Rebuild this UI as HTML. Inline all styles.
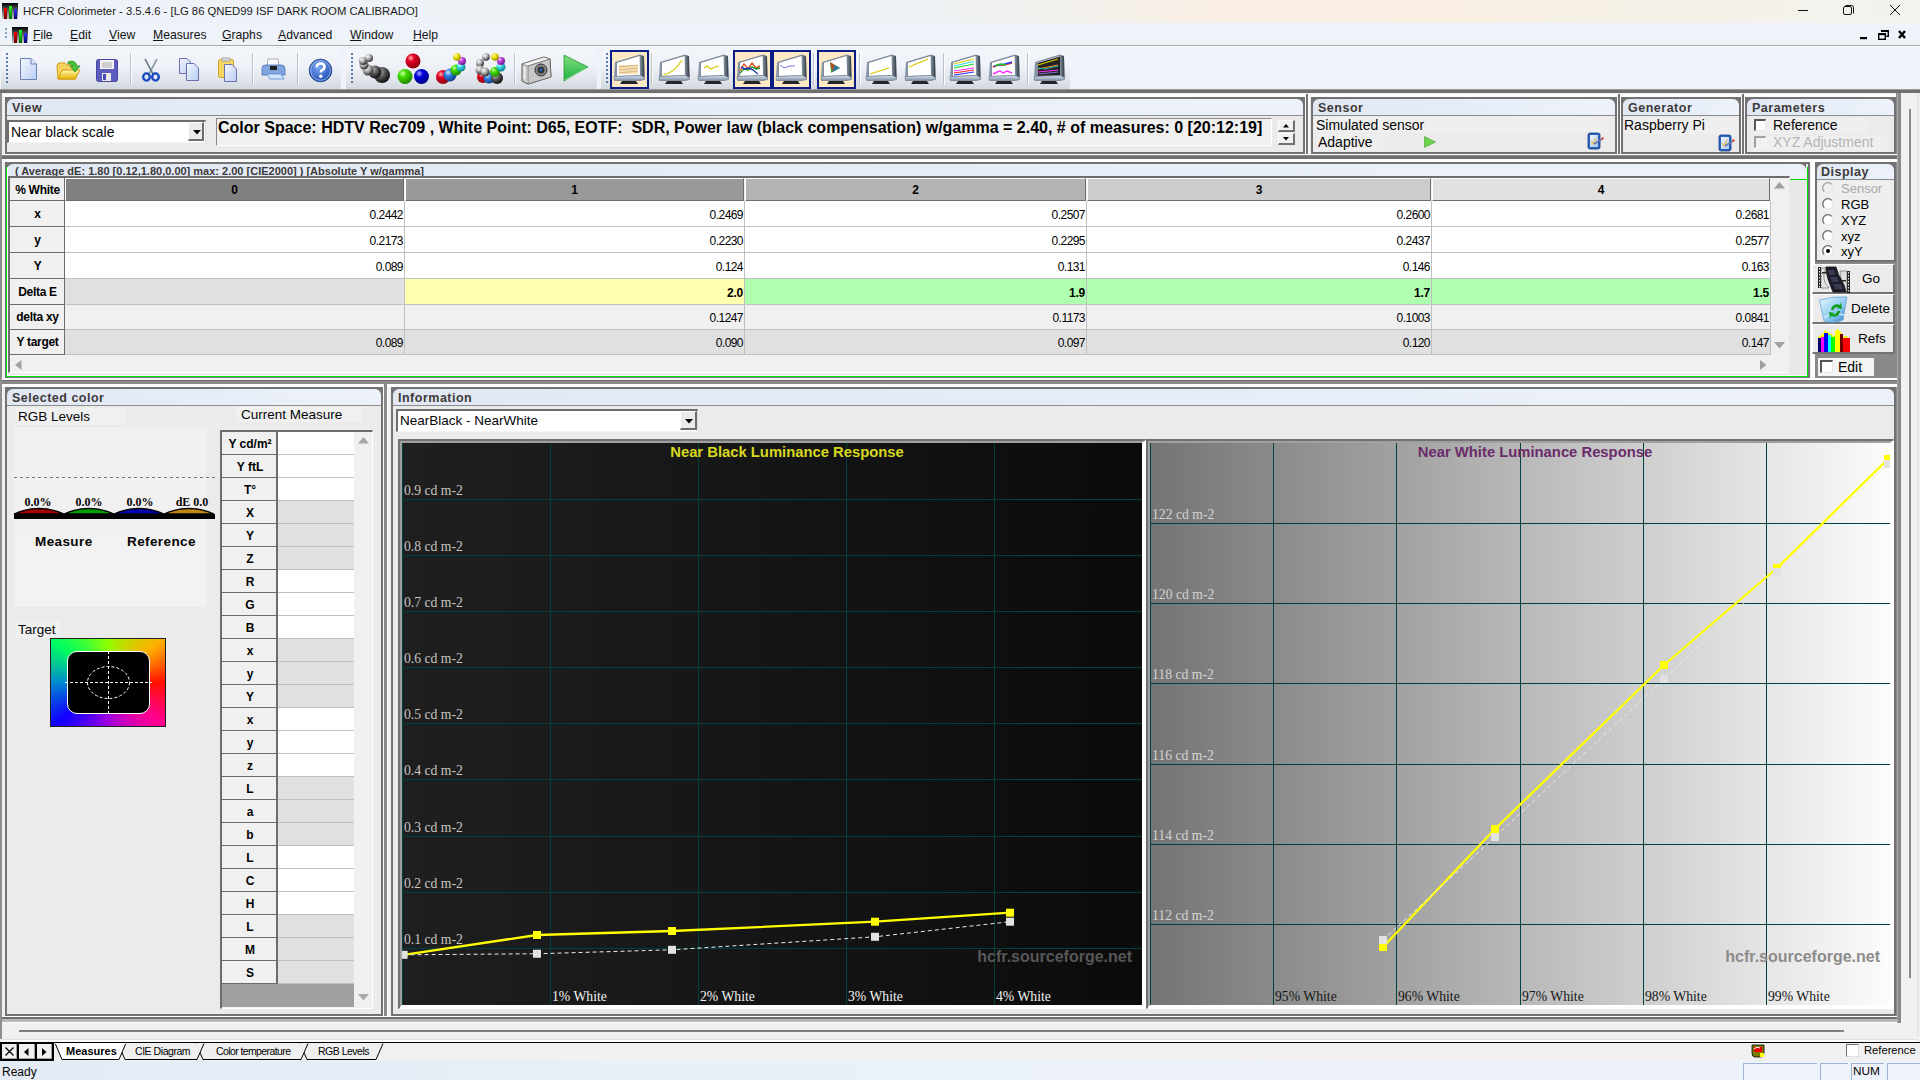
<!DOCTYPE html><html><head><meta charset="utf-8"><style>
*{margin:0;padding:0;box-sizing:border-box}
html,body{width:1920px;height:1080px;overflow:hidden;background:#f0f0f0;font-family:"Liberation Sans",sans-serif;font-size:12px;color:#000}
.p{position:absolute}
.t{position:absolute;white-space:nowrap;line-height:1}
.serif{font-family:"Liberation Serif",serif}
.b{font-weight:bold}
.pnl{position:absolute;border:2px solid #717171;border-radius:0;background:#ebebeb}
.ph{position:absolute;left:0;top:0;right:0;height:17px;background:linear-gradient(90deg,#e1e8f4,#ecf1f9);border-bottom:1px solid #8a8a8a;border-radius:6px 6px 0 0}
.pt{position:absolute;left:6px;top:3px;font-weight:bold;font-size:12.5px;color:#3b3838;white-space:nowrap;line-height:1}
svg{position:absolute;overflow:visible}
</style></head><body>
<div class="p " style="left:0px;top:0px;width:1920px;height:23px;background:linear-gradient(90deg,#eef2f8 0%,#edf2f7 45%,#f1f1ee 54%,#f9eee4 64%,#f9efe3 76%,#f4f1e8 88%,#f2f2ee 100%)"></div>
<svg style="left:2px;top:3px" width="16" height="16" viewBox="0 0 16 16">
<defs><linearGradient id="ig2" x1="0" y1="0" x2="0" y2="1"><stop offset="0" stop-color="#000"/><stop offset="1" stop-color="#000" stop-opacity="0.15"/></linearGradient>
<linearGradient id="rg2" x1="0" y1="0" x2="0" y2="1"><stop offset="0" stop-color="#f00"/><stop offset="1" stop-color="#600"/></linearGradient>
<linearGradient id="gg2" x1="0" y1="0" x2="0" y2="1"><stop offset="0" stop-color="#2f2"/><stop offset="1" stop-color="#060"/></linearGradient>
<linearGradient id="bg2" x1="0" y1="0" x2="0" y2="1"><stop offset="0" stop-color="#33f"/><stop offset="1" stop-color="#006"/></linearGradient></defs>
<rect x="0" y="0" width="16" height="16" fill="url(#ig2)"/>
<rect x="2" y="5" width="3" height="11" fill="url(#rg2)"/><rect x="7" y="3" width="3" height="13" fill="url(#gg2)"/><rect x="12" y="6" width="3" height="10" fill="url(#bg2)"/></svg>
<div class="t " style="left:23px;top:6px;font-size:11.3px;color:#1b1b1b">HCFR Colorimeter - 3.5.4.6 - [LG 86 QNED99 ISF DARK ROOM CALIBRADO]</div>
<svg style="left:1798px;top:4px" width="120" height="14" viewBox="0 0 120 14">
<line x1="0" y1="6.5" x2="10" y2="6.5" stroke="#111" stroke-width="1"/>
<rect x="45.5" y="2.5" width="8" height="8" rx="1.5" fill="none" stroke="#111" stroke-width="1"/>
<path d="M47.5 1.5 h6 a2 2 0 0 1 2 2 v6" fill="none" stroke="#111" stroke-width="1"/>
<line x1="92" y1="1" x2="102" y2="11" stroke="#111" stroke-width="1"/><line x1="102" y1="1" x2="92" y2="11" stroke="#111" stroke-width="1"/>
</svg>
<div class="p " style="left:0px;top:23px;width:1920px;height:22px;background:#eef2f9"></div>
<div class="p " style="left:0px;top:45px;width:1920px;height:1px;background:#a5a8ad"></div>
<div class="p " style="left:0px;top:46px;width:1920px;height:1px;background:#fbfcfe"></div>
<div class="p " style="left:5px;top:28px;width:2px;height:2px;background:#8aa0c0"></div>
<div class="p " style="left:5px;top:32px;width:2px;height:2px;background:#8aa0c0"></div>
<div class="p " style="left:5px;top:36px;width:2px;height:2px;background:#8aa0c0"></div>
<svg style="left:12px;top:27px" width="16" height="16" viewBox="0 0 16 16">
<defs><linearGradient id="ig12" x1="0" y1="0" x2="0" y2="1"><stop offset="0" stop-color="#000"/><stop offset="1" stop-color="#000" stop-opacity="0.15"/></linearGradient>
<linearGradient id="rg12" x1="0" y1="0" x2="0" y2="1"><stop offset="0" stop-color="#f00"/><stop offset="1" stop-color="#600"/></linearGradient>
<linearGradient id="gg12" x1="0" y1="0" x2="0" y2="1"><stop offset="0" stop-color="#2f2"/><stop offset="1" stop-color="#060"/></linearGradient>
<linearGradient id="bg12" x1="0" y1="0" x2="0" y2="1"><stop offset="0" stop-color="#33f"/><stop offset="1" stop-color="#006"/></linearGradient></defs>
<rect x="0" y="0" width="16" height="16" fill="url(#ig12)"/>
<rect x="2" y="5" width="3" height="11" fill="url(#rg12)"/><rect x="7" y="3" width="3" height="13" fill="url(#gg12)"/><rect x="12" y="6" width="3" height="10" fill="url(#bg12)"/></svg>
<div class="t " style="left:33px;top:29px;font-size:12.2px;color:#141414"><u>F</u>ile</div>
<div class="t " style="left:70px;top:29px;font-size:12.2px;color:#141414"><u>E</u>dit</div>
<div class="t " style="left:109px;top:29px;font-size:12.2px;color:#141414"><u>V</u>iew</div>
<div class="t " style="left:153px;top:29px;font-size:12.2px;color:#141414"><u>M</u>easures</div>
<div class="t " style="left:222px;top:29px;font-size:12.2px;color:#141414"><u>G</u>raphs</div>
<div class="t " style="left:278px;top:29px;font-size:12.2px;color:#141414"><u>A</u>dvanced</div>
<div class="t " style="left:350px;top:29px;font-size:12.2px;color:#141414"><u>W</u>indow</div>
<div class="t " style="left:413px;top:29px;font-size:12.2px;color:#141414"><u>H</u>elp</div>
<svg style="left:1858px;top:28px" width="52" height="14" viewBox="0 0 52 14">
<rect x="2" y="9" width="7" height="2.2" fill="#000"/>
<rect x="20.7" y="5.7" width="6.6" height="5.6" fill="none" stroke="#000" stroke-width="1.4"/><rect x="20" y="5" width="8" height="2.2" fill="#000"/>
<path d="M23.7 4 v-1.3 h6.6 v5.6 h-2" fill="none" stroke="#000" stroke-width="1.4"/><rect x="23" y="2" width="8" height="2" fill="#000"/>
<path d="M41 3 L47 10 M47 3 L41 10" stroke="#000" stroke-width="2.4"/>
</svg>
<div class="p " style="left:0px;top:47px;width:1920px;height:43px;background:#eef2f9"></div>
<div class="p " style="left:1px;top:49px;width:340px;height:40px;background:linear-gradient(180deg,#f2f5fa 0%,#eef1f7 45%,#dfe3ea 80%,#d3d8e0 100%);border-radius:4px 4px 0 0"></div>
<div class="p " style="left:6px;top:53px;width:2px;height:2px;background:#5a7aa8"></div>
<div class="p " style="left:6px;top:57px;width:2px;height:2px;background:#5a7aa8"></div>
<div class="p " style="left:6px;top:61px;width:2px;height:2px;background:#5a7aa8"></div>
<div class="p " style="left:6px;top:65px;width:2px;height:2px;background:#5a7aa8"></div>
<div class="p " style="left:6px;top:69px;width:2px;height:2px;background:#5a7aa8"></div>
<div class="p " style="left:6px;top:73px;width:2px;height:2px;background:#5a7aa8"></div>
<div class="p " style="left:6px;top:77px;width:2px;height:2px;background:#5a7aa8"></div>
<div class="p " style="left:6px;top:81px;width:2px;height:2px;background:#5a7aa8"></div>
<div class="p " style="left:346px;top:49px;width:251px;height:40px;background:linear-gradient(180deg,#f2f5fa 0%,#eef1f7 45%,#dfe3ea 80%,#d3d8e0 100%);border-radius:4px 4px 0 0"></div>
<div class="p " style="left:351px;top:53px;width:2px;height:2px;background:#5a7aa8"></div>
<div class="p " style="left:351px;top:57px;width:2px;height:2px;background:#5a7aa8"></div>
<div class="p " style="left:351px;top:61px;width:2px;height:2px;background:#5a7aa8"></div>
<div class="p " style="left:351px;top:65px;width:2px;height:2px;background:#5a7aa8"></div>
<div class="p " style="left:351px;top:69px;width:2px;height:2px;background:#5a7aa8"></div>
<div class="p " style="left:351px;top:73px;width:2px;height:2px;background:#5a7aa8"></div>
<div class="p " style="left:351px;top:77px;width:2px;height:2px;background:#5a7aa8"></div>
<div class="p " style="left:351px;top:81px;width:2px;height:2px;background:#5a7aa8"></div>
<div class="p " style="left:601px;top:49px;width:469px;height:40px;background:linear-gradient(180deg,#f2f5fa 0%,#eef1f7 45%,#dfe3ea 80%,#d3d8e0 100%);border-radius:4px 4px 0 0"></div>
<div class="p " style="left:606px;top:53px;width:2px;height:2px;background:#5a7aa8"></div>
<div class="p " style="left:606px;top:57px;width:2px;height:2px;background:#5a7aa8"></div>
<div class="p " style="left:606px;top:61px;width:2px;height:2px;background:#5a7aa8"></div>
<div class="p " style="left:606px;top:65px;width:2px;height:2px;background:#5a7aa8"></div>
<div class="p " style="left:606px;top:69px;width:2px;height:2px;background:#5a7aa8"></div>
<div class="p " style="left:606px;top:73px;width:2px;height:2px;background:#5a7aa8"></div>
<div class="p " style="left:606px;top:77px;width:2px;height:2px;background:#5a7aa8"></div>
<div class="p " style="left:606px;top:81px;width:2px;height:2px;background:#5a7aa8"></div>
<div class="p " style="left:130px;top:53px;width:1px;height:32px;background:#b9c0cc"></div>
<div class="p " style="left:131px;top:53px;width:1px;height:32px;background:#fdfdfe"></div>
<div class="p " style="left:252px;top:53px;width:1px;height:32px;background:#b9c0cc"></div>
<div class="p " style="left:253px;top:53px;width:1px;height:32px;background:#fdfdfe"></div>
<div class="p " style="left:297px;top:53px;width:1px;height:32px;background:#b9c0cc"></div>
<div class="p " style="left:298px;top:53px;width:1px;height:32px;background:#fdfdfe"></div>
<div class="p " style="left:514px;top:53px;width:1px;height:32px;background:#b9c0cc"></div>
<div class="p " style="left:515px;top:53px;width:1px;height:32px;background:#fdfdfe"></div>
<div class="p " style="left:651px;top:53px;width:1px;height:32px;background:#b9c0cc"></div>
<div class="p " style="left:652px;top:53px;width:1px;height:32px;background:#fdfdfe"></div>
<div class="p " style="left:813px;top:53px;width:1px;height:32px;background:#b9c0cc"></div>
<div class="p " style="left:814px;top:53px;width:1px;height:32px;background:#fdfdfe"></div>
<div class="p " style="left:859px;top:53px;width:1px;height:32px;background:#b9c0cc"></div>
<div class="p " style="left:860px;top:53px;width:1px;height:32px;background:#fdfdfe"></div>
<div class="p " style="left:943px;top:53px;width:1px;height:32px;background:#b9c0cc"></div>
<div class="p " style="left:944px;top:53px;width:1px;height:32px;background:#fdfdfe"></div>
<div class="p " style="left:1027px;top:53px;width:1px;height:32px;background:#b9c0cc"></div>
<div class="p " style="left:1028px;top:53px;width:1px;height:32px;background:#fdfdfe"></div>
<svg style="left:0;top:0" width="0" height="0"><defs>
<linearGradient id="paper" x1="0" y1="0" x2="1" y2="1"><stop offset="0" stop-color="#f4f7ff"/><stop offset="1" stop-color="#b9cdf3"/></linearGradient>
<linearGradient id="fold" x1="0" y1="0" x2="0" y2="1"><stop offset="0" stop-color="#fff6b0"/><stop offset="1" stop-color="#e8b400"/></linearGradient>
<radialGradient id="ballgray" cx="0.35" cy="0.3" r="0.7"><stop offset="0" stop-color="#fff"/><stop offset="0.5" stop-color="#aaa"/><stop offset="1" stop-color="#333"/></radialGradient>
<radialGradient id="balldark" cx="0.35" cy="0.3" r="0.7"><stop offset="0" stop-color="#bbb"/><stop offset="0.5" stop-color="#555"/><stop offset="1" stop-color="#111"/></radialGradient>
<radialGradient id="ballr" cx="0.35" cy="0.3" r="0.7"><stop offset="0" stop-color="#ffb0b0"/><stop offset="0.35" stop-color="#e00020"/><stop offset="1" stop-color="#900010"/></radialGradient>
<radialGradient id="ballg" cx="0.35" cy="0.3" r="0.7"><stop offset="0" stop-color="#d0ffb0"/><stop offset="0.35" stop-color="#44dd00"/><stop offset="1" stop-color="#208800"/></radialGradient>
<radialGradient id="ballb" cx="0.35" cy="0.3" r="0.7"><stop offset="0" stop-color="#b0b0ff"/><stop offset="0.35" stop-color="#0000dd"/><stop offset="1" stop-color="#000088"/></radialGradient>
<radialGradient id="bally" cx="0.35" cy="0.3" r="0.7"><stop offset="0" stop-color="#ffffd0"/><stop offset="0.4" stop-color="#f0e000"/><stop offset="1" stop-color="#a09000"/></radialGradient>
<radialGradient id="ballm" cx="0.35" cy="0.3" r="0.7"><stop offset="0" stop-color="#ffd0ff"/><stop offset="0.4" stop-color="#c040e0"/><stop offset="1" stop-color="#702090"/></radialGradient>
<radialGradient id="ballc" cx="0.35" cy="0.3" r="0.7"><stop offset="0" stop-color="#e0ffff"/><stop offset="0.4" stop-color="#30d8e0"/><stop offset="1" stop-color="#108090"/></radialGradient>
<radialGradient id="ballbl" cx="0.35" cy="0.3" r="0.7"><stop offset="0" stop-color="#d0e8ff"/><stop offset="0.4" stop-color="#3080e0"/><stop offset="1" stop-color="#104090"/></radialGradient>
<linearGradient id="monbase" x1="0" y1="0" x2="0" y2="1"><stop offset="0" stop-color="#dfe6f0"/><stop offset="1" stop-color="#7f90a8"/></linearGradient>
<linearGradient id="monside" x1="0" y1="0" x2="1" y2="0"><stop offset="0" stop-color="#8090a0"/><stop offset="1" stop-color="#303840"/></linearGradient>
<linearGradient id="playg" x1="0" y1="0" x2="0" y2="1"><stop offset="0" stop-color="#80e080"/><stop offset="1" stop-color="#20b040"/></linearGradient>
<radialGradient id="helpg" cx="0.4" cy="0.35" r="0.7"><stop offset="0" stop-color="#7aa8f0"/><stop offset="1" stop-color="#1a48b0"/></radialGradient>
</defs></svg>
<svg style="left:19px;top:57px" width="19" height="24" viewBox="0 0 19 24"><path d="M1.5 1.5 H12 L17.5 7 V22.5 H1.5 Z" fill="url(#paper)" stroke="#6d80b5" stroke-width="1"/><path d="M12 1.5 V7 H17.5" fill="#dde6f8" stroke="#6d80b5" stroke-width="1"/></svg>
<svg style="left:55px;top:58px" width="26" height="24" viewBox="0 0 26 24"><path d="M2 8 Q2 5 5 5 H10 L12 7 H19 Q21 7 21 9 V21 H3 Z" fill="#f5d560" stroke="#d49a10" stroke-width="1"/><path d="M3 21 L7 12 H25 L20 21 Z" fill="url(#fold)" stroke="#d49a10" stroke-width="1"/><path d="M13 4 Q20 1 22 8 L25 8 L20 14 L15 8 L18 8 Q17 5 13 6 Z" fill="#4cc43c" stroke="#2a8a20" stroke-width="0.8"/></svg>
<svg style="left:96px;top:59px" width="22" height="23" viewBox="0 0 22 23"><rect x="0.5" y="0.5" width="21" height="22" rx="2" fill="#5b5bc0" stroke="#4848a0"/><rect x="4" y="1" width="14" height="9" fill="#f4f4f4"/><line x1="6" y1="4" x2="16" y2="4" stroke="#aaa"/><line x1="6" y1="6" x2="16" y2="6" stroke="#aaa"/><line x1="6" y1="8" x2="16" y2="8" stroke="#aaa"/><rect x="6" y="14" width="9" height="8" fill="#e8e8e8"/><rect x="7" y="15" width="3" height="6" fill="#4a4ab0"/></svg>
<svg style="left:142px;top:58px" width="18" height="24" viewBox="0 0 18 24"><path d="M3 1 L11 16 M15 1 L7 16" stroke="#8a9aaa" stroke-width="1.6" fill="none"/><path d="M3 1 L11 16" stroke="#334" stroke-width="0.5"/><ellipse cx="4.5" cy="19" rx="3.3" ry="3.6" fill="none" stroke="#1848c0" stroke-width="2.4"/><ellipse cx="13.5" cy="19" rx="3.3" ry="3.6" fill="none" stroke="#1848c0" stroke-width="2.4"/></svg>
<svg style="left:178px;top:57px" width="23" height="25" viewBox="0 0 23 25"><path d="M1.5 1.5 H9 L12.5 5 V16.5 H1.5 Z" fill="url(#paper)" stroke="#6d70b0"/><path d="M8.5 6.5 H16 L20.5 11 V23.5 H8.5 Z" fill="url(#paper)" stroke="#6d70b0"/></svg>
<svg style="left:217px;top:57px" width="23" height="26" viewBox="0 0 23 26"><rect x="1.5" y="2.5" width="15" height="18" rx="2" fill="#f6d665" stroke="#d0a020"/><rect x="5" y="1" width="8" height="3" fill="#ddd" stroke="#999" stroke-width="0.8"/><path d="M7.5 7.5 H15 L19.5 12 V24.5 H7.5 Z" fill="url(#paper)" stroke="#6d70b0"/></svg>
<svg style="left:261px;top:58px" width="25" height="24" viewBox="0 0 25 24"><path d="M7 1 H17 L18 8 H6 Z" fill="#fff" stroke="#999" stroke-width="0.8"/><path d="M1 10 Q1 7 5 7 H20 Q24 7 24 11 V17 H1 Z" fill="#7fa6df" stroke="#4a70b0" stroke-width="0.8"/><rect x="9" y="8" width="7" height="4" fill="#222"/><path d="M6 16 H20 L23 21 H9 Z" fill="#cfe4fa" stroke="#5a8ad0" stroke-width="0.8"/></svg>
<svg style="left:308px;top:58px" width="25" height="25" viewBox="0 0 25 25"><circle cx="12.5" cy="12.5" r="11.3" fill="url(#helpg)" stroke="#2c4f90" stroke-width="1"/><circle cx="12.5" cy="12.5" r="9.8" fill="none" stroke="#a8c4f0" stroke-width="0.8"/><path d="M8.7 9.2 Q8.7 5.5 12.7 5.5 Q16.5 5.5 16.5 8.8 Q16.5 11 14 12.2 Q12.8 12.9 12.8 14.5" fill="none" stroke="#fff" stroke-width="2.6"/><circle cx="12.8" cy="18.2" r="1.7" fill="#fff"/></svg>
<svg style="left:358px;top:53px" width="32" height="32" viewBox="0 0 32 32"><circle cx="24" cy="22" r="8" fill="url(#balldark)"/><circle cx="17" cy="19" r="6.5" fill="url(#balldark)"/><circle cx="10" cy="17" r="5.5" fill="url(#ballgray)"/><circle cx="6" cy="12" r="4.5" fill="url(#ballgray)"/><circle cx="5" cy="8" r="4" fill="url(#ballgray)"/><circle cx="11" cy="5" r="4" fill="url(#ballgray)"/></svg>
<svg style="left:397px;top:53px" width="32" height="32" viewBox="0 0 32 32"><circle cx="16" cy="8" r="7.5" fill="url(#ballr)"/><circle cx="8" cy="23.5" r="7.5" fill="url(#ballg)"/><circle cx="24.5" cy="23.5" r="7.5" fill="url(#ballb)"/></svg>
<svg style="left:436px;top:53px" width="32" height="32" viewBox="0 0 32 32"><circle cx="7" cy="24" r="7" fill="url(#ballr)"/><circle cx="14" cy="22" r="6.5" fill="url(#ballbl)"/><circle cx="20" cy="17" r="5.5" fill="url(#ballg)"/><circle cx="25" cy="14" r="4.5" fill="url(#ballc)"/><circle cx="26" cy="8" r="4" fill="url(#ballm)"/><circle cx="21" cy="4" r="3.8" fill="url(#bally)"/></svg>
<svg style="left:475px;top:53px" width="32" height="32" viewBox="0 0 32 32"><circle cx="8" cy="24" r="6" fill="url(#ballr)"/><circle cx="14" cy="25" r="5.5" fill="url(#ballbl)"/><circle cx="22" cy="25" r="6" fill="url(#balldark)"/><circle cx="20" cy="19" r="5" fill="url(#ballg)"/><circle cx="26" cy="14" r="4.5" fill="url(#ballc)"/><circle cx="26" cy="8" r="4" fill="url(#ballm)"/><circle cx="20" cy="4" r="3.8" fill="url(#bally)"/><circle cx="11" cy="4" r="3.8" fill="url(#ballgray)"/><circle cx="5" cy="10" r="4" fill="url(#ballgray)"/><circle cx="5" cy="17" r="4.5" fill="url(#ballgray)"/><circle cx="10" cy="19" r="4.5" fill="url(#ballgray)"/></svg>
<svg style="left:520px;top:53px" width="32" height="32" viewBox="0 0 32 32"><path d="M2 11 L24 4 L30 6 L31 24 L8 31 L2 28 Z" fill="#dcdcdc" stroke="#555" stroke-width="1"/><path d="M2 11 L24 4 L30 6 L8 13 Z" fill="#f4f4f4" stroke="#666" stroke-width="0.6"/><path d="M8 13 L30 6 L31 24 L8 31 Z" fill="#c8c8c8" stroke="#555" stroke-width="0.6"/><circle cx="21" cy="17" r="6" fill="#888" stroke="#333"/><circle cx="21" cy="17" r="3.5" fill="#333"/><circle cx="21" cy="17" r="1.3" fill="#1d6cf0"/><rect x="3" y="13" width="3" height="14" fill="#eee" stroke="#999" stroke-width="0.5"/></svg>
<svg style="left:563px;top:54px" width="26" height="28" viewBox="0 0 26 28"><path d="M1 1 L25 13 L1 27 Z" fill="url(#playg)" stroke="#2a9a3a" stroke-width="0.8"/><path d="M2 26 L24 14" stroke="#c0f0c0" stroke-width="0.8"/></svg>
<div class="p " style="left:610px;top:50px;width:39px;height:39px;background:#fde9c3;border:2px solid #0b1c84"></div>
<div class="p " style="left:733px;top:50px;width:39px;height:39px;background:#fde9c3;border:2px solid #0b1c84"></div>
<div class="p " style="left:772px;top:50px;width:39px;height:39px;background:#fde9c3;border:2px solid #0b1c84"></div>
<div class="p " style="left:817px;top:50px;width:39px;height:39px;background:#fde9c3;border:2px solid #0b1c84"></div>
<div class="p " style="left:772px;top:50px;width:1px;height:39px;background:#0b1c84"></div>
<svg style="left:613px;top:53px" width="32" height="32" viewBox="0 0 32 32"><path d="M2 9 L27 1.5 L31 3 L31.5 25 L27 26 L3 27 L1 25 Z" fill="#8494a8"/>
<path d="M3.5 9.5 L27 2.5 L27.5 22.5 L3.5 23.5 Z" fill="#fff" stroke="#5a6878" stroke-width="0.6"/>
<path d="M27 2 L31 3.2 L31.5 24.5 L27.5 23 Z" fill="url(#monside)"/>
<path d="M1 23.5 L27.5 22.5 L31.5 24.5 L31.5 26.5 L27.5 27.5 L1.5 27.5 L1 25.5 Z" fill="url(#monbase)" stroke="#59667a" stroke-width="0.5"/>
<path d="M9 28 H23 L25 31 H7 Z" fill="#22262c"/>
<g fill="#f6dfb0"><rect x="6" y="12" width="19" height="9"/></g><g stroke="#c9a070" stroke-width="0.7"><line x1="6" y1="14" x2="25" y2="12"/><line x1="6" y1="17" x2="25" y2="15"/><line x1="6" y1="20" x2="25" y2="18"/></g></svg>
<svg style="left:658px;top:53px" width="32" height="32" viewBox="0 0 32 32"><path d="M2 9 L27 1.5 L31 3 L31.5 25 L27 26 L3 27 L1 25 Z" fill="#8494a8"/>
<path d="M3.5 9.5 L27 2.5 L27.5 22.5 L3.5 23.5 Z" fill="#fff" stroke="#5a6878" stroke-width="0.6"/>
<path d="M27 2 L31 3.2 L31.5 24.5 L27.5 23 Z" fill="url(#monside)"/>
<path d="M1 23.5 L27.5 22.5 L31.5 24.5 L31.5 26.5 L27.5 27.5 L1.5 27.5 L1 25.5 Z" fill="url(#monbase)" stroke="#59667a" stroke-width="0.5"/>
<path d="M9 28 H23 L25 31 H7 Z" fill="#22262c"/>
<path d="M5 22 Q16 20 24 7" fill="none" stroke="#d8c800" stroke-width="1.2"/></svg>
<svg style="left:697px;top:53px" width="32" height="32" viewBox="0 0 32 32"><path d="M2 9 L27 1.5 L31 3 L31.5 25 L27 26 L3 27 L1 25 Z" fill="#8494a8"/>
<path d="M3.5 9.5 L27 2.5 L27.5 22.5 L3.5 23.5 Z" fill="#fff" stroke="#5a6878" stroke-width="0.6"/>
<path d="M27 2 L31 3.2 L31.5 24.5 L27.5 23 Z" fill="url(#monside)"/>
<path d="M1 23.5 L27.5 22.5 L31.5 24.5 L31.5 26.5 L27.5 27.5 L1.5 27.5 L1 25.5 Z" fill="url(#monbase)" stroke="#59667a" stroke-width="0.5"/>
<path d="M9 28 H23 L25 31 H7 Z" fill="#22262c"/>
<path d="M7 15 L10 13 L14 16 L18 14 L22 13" fill="none" stroke="#d8c800" stroke-width="1.2"/></svg>
<svg style="left:736px;top:53px" width="32" height="32" viewBox="0 0 32 32"><path d="M2 9 L27 1.5 L31 3 L31.5 25 L27 26 L3 27 L1 25 Z" fill="#8494a8"/>
<path d="M3.5 9.5 L27 2.5 L27.5 22.5 L3.5 23.5 Z" fill="#fff" stroke="#5a6878" stroke-width="0.6"/>
<path d="M27 2 L31 3.2 L31.5 24.5 L27.5 23 Z" fill="url(#monside)"/>
<path d="M1 23.5 L27.5 22.5 L31.5 24.5 L31.5 26.5 L27.5 27.5 L1.5 27.5 L1 25.5 Z" fill="url(#monbase)" stroke="#59667a" stroke-width="0.5"/>
<path d="M9 28 H23 L25 31 H7 Z" fill="#22262c"/>
<path d="M4 18 L8 11 L12 16 L16 10 L20 15 L24 13" fill="none" stroke="#e05020" stroke-width="1.4"/><path d="M4 20 L8 16 L12 17 L16 14 L20 16 L24 15" fill="none" stroke="#209020" stroke-width="1.4"/><path d="M5 14 L9 16 L13 15 L17 17 L22 21" fill="none" stroke="#1838b0" stroke-width="1.4"/></svg>
<svg style="left:775px;top:53px" width="32" height="32" viewBox="0 0 32 32"><path d="M2 9 L27 1.5 L31 3 L31.5 25 L27 26 L3 27 L1 25 Z" fill="#8494a8"/>
<path d="M3.5 9.5 L27 2.5 L27.5 22.5 L3.5 23.5 Z" fill="#fff" stroke="#5a6878" stroke-width="0.6"/>
<path d="M27 2 L31 3.2 L31.5 24.5 L27.5 23 Z" fill="url(#monside)"/>
<path d="M1 23.5 L27.5 22.5 L31.5 24.5 L31.5 26.5 L27.5 27.5 L1.5 27.5 L1 25.5 Z" fill="url(#monbase)" stroke="#59667a" stroke-width="0.5"/>
<path d="M9 28 H23 L25 31 H7 Z" fill="#22262c"/>
<path d="M5 12 L9 15 L15 13 L20 13" fill="none" stroke="#7a70e0" stroke-width="1"/></svg>
<svg style="left:820px;top:53px" width="32" height="32" viewBox="0 0 32 32"><path d="M2 9 L27 1.5 L31 3 L31.5 25 L27 26 L3 27 L1 25 Z" fill="#8494a8"/>
<path d="M3.5 9.5 L27 2.5 L27.5 22.5 L3.5 23.5 Z" fill="#fff" stroke="#5a6878" stroke-width="0.6"/>
<path d="M27 2 L31 3.2 L31.5 24.5 L27.5 23 Z" fill="url(#monside)"/>
<path d="M1 23.5 L27.5 22.5 L31.5 24.5 L31.5 26.5 L27.5 27.5 L1.5 27.5 L1 25.5 Z" fill="url(#monbase)" stroke="#59667a" stroke-width="0.5"/>
<path d="M9 28 H23 L25 31 H7 Z" fill="#22262c"/>
<path d="M10 9 L20 15 L11 20 Z" fill="#40c040"/><path d="M10 9 L15 12 L12 19 Z" fill="#e02020" opacity="0.7"/><path d="M15 12 L20 15 L12 19 Z" fill="#2040e0" opacity="0.6"/></svg>
<svg style="left:865px;top:53px" width="32" height="32" viewBox="0 0 32 32"><path d="M2 9 L27 1.5 L31 3 L31.5 25 L27 26 L3 27 L1 25 Z" fill="#8494a8"/>
<path d="M3.5 9.5 L27 2.5 L27.5 22.5 L3.5 23.5 Z" fill="#fff" stroke="#5a6878" stroke-width="0.6"/>
<path d="M27 2 L31 3.2 L31.5 24.5 L27.5 23 Z" fill="url(#monside)"/>
<path d="M1 23.5 L27.5 22.5 L31.5 24.5 L31.5 26.5 L27.5 27.5 L1.5 27.5 L1 25.5 Z" fill="url(#monbase)" stroke="#59667a" stroke-width="0.5"/>
<path d="M9 28 H23 L25 31 H7 Z" fill="#22262c"/>
<path d="M5 21 L24 15" fill="none" stroke="#d8c800" stroke-width="1.2"/></svg>
<svg style="left:904px;top:53px" width="32" height="32" viewBox="0 0 32 32"><path d="M2 9 L27 1.5 L31 3 L31.5 25 L27 26 L3 27 L1 25 Z" fill="#8494a8"/>
<path d="M3.5 9.5 L27 2.5 L27.5 22.5 L3.5 23.5 Z" fill="#fff" stroke="#5a6878" stroke-width="0.6"/>
<path d="M27 2 L31 3.2 L31.5 24.5 L27.5 23 Z" fill="url(#monside)"/>
<path d="M1 23.5 L27.5 22.5 L31.5 24.5 L31.5 26.5 L27.5 27.5 L1.5 27.5 L1 25.5 Z" fill="url(#monbase)" stroke="#59667a" stroke-width="0.5"/>
<path d="M9 28 H23 L25 31 H7 Z" fill="#22262c"/>
<path d="M5 14 L24 6" fill="none" stroke="#d8c800" stroke-width="1.2"/></svg>
<svg style="left:949px;top:53px" width="32" height="32" viewBox="0 0 32 32"><path d="M2 9 L27 1.5 L31 3 L31.5 25 L27 26 L3 27 L1 25 Z" fill="#8494a8"/>
<path d="M3.5 9.5 L27 2.5 L27.5 22.5 L3.5 23.5 Z" fill="#fff" stroke="#5a6878" stroke-width="0.6"/>
<path d="M27 2 L31 3.2 L31.5 24.5 L27.5 23 Z" fill="url(#monside)"/>
<path d="M1 23.5 L27.5 22.5 L31.5 24.5 L31.5 26.5 L27.5 27.5 L1.5 27.5 L1 25.5 Z" fill="url(#monbase)" stroke="#59667a" stroke-width="0.5"/>
<path d="M9 28 H23 L25 31 H7 Z" fill="#22262c"/>
<g fill="none" stroke-width="1.1"><path d="M5 11 L25 6" stroke="#e0c800"/><path d="M5 13 L25 8.5" stroke="#20e0e8"/><path d="M5 15 L25 11" stroke="#20d020"/><path d="M5 18 L25 15" stroke="#ff30ff"/><path d="M5 20 L25 17" stroke="#ff2020"/><path d="M5 22 L25 19" stroke="#2030ff"/></g></svg>
<svg style="left:988px;top:53px" width="32" height="32" viewBox="0 0 32 32"><path d="M2 9 L27 1.5 L31 3 L31.5 25 L27 26 L3 27 L1 25 Z" fill="#8494a8"/>
<path d="M3.5 9.5 L27 2.5 L27.5 22.5 L3.5 23.5 Z" fill="#fff" stroke="#5a6878" stroke-width="0.6"/>
<path d="M27 2 L31 3.2 L31.5 24.5 L27.5 23 Z" fill="url(#monside)"/>
<path d="M1 23.5 L27.5 22.5 L31.5 24.5 L31.5 26.5 L27.5 27.5 L1.5 27.5 L1 25.5 Z" fill="url(#monbase)" stroke="#59667a" stroke-width="0.5"/>
<path d="M9 28 H23 L25 31 H7 Z" fill="#22262c"/>
<g fill="none" stroke-width="1.4"><path d="M5 14 L10 12 L16 12 L24 10" stroke="#ff2020"/><path d="M6 13 L11 12 L17 11 L24 9" stroke="#2040ff"/><path d="M7 13 L12 11 L18 12" stroke="#20c020"/><path d="M5 21 L9 19 L12 18 L15 20 L19 18 L24 20" stroke="#ff30ff"/></g></svg>
<svg style="left:1033px;top:53px" width="32" height="32" viewBox="0 0 32 32"><path d="M2 9 L27 1.5 L31 3 L31.5 25 L27 26 L3 27 L1 25 Z" fill="#8494a8"/>
<path d="M3.5 9.5 L27 2.5 L27.5 22.5 L3.5 23.5 Z" fill="#fff" stroke="#5a6878" stroke-width="0.6"/>
<path d="M27 2 L31 3.2 L31.5 24.5 L27.5 23 Z" fill="url(#monside)"/>
<path d="M1 23.5 L27.5 22.5 L31.5 24.5 L31.5 26.5 L27.5 27.5 L1.5 27.5 L1 25.5 Z" fill="url(#monbase)" stroke="#59667a" stroke-width="0.5"/>
<path d="M9 28 H23 L25 31 H7 Z" fill="#22262c"/>
<path d="M4.5 10 L27 3.5 L27 22 L4.5 23 Z" fill="#222"/><g fill="none" stroke-width="1.1"><path d="M5 12 L25 6" stroke="#e0c800"/><path d="M5 16 L10 15 L15 14 L25 12" stroke="#ff8020"/><path d="M5 15 L12 16 L25 13" stroke="#20c0c0"/><path d="M5 19 L25 17" stroke="#ff30ff"/><path d="M6 21 L25 19" stroke="#8070e0"/></g></svg>
<div class="p " style="left:0px;top:89px;width:1920px;height:1px;background:#9a9a9a"></div>
<div class="p " style="left:0px;top:90px;width:1920px;height:3px;background:#6f6f6f"></div>
<div class="p " style="left:0px;top:93px;width:1920px;height:949px;background:#f0f0f0"></div>
<div class="p " style="left:0px;top:93px;width:2px;height:946px;background:#8f8f8f"></div>
<div class="p " style="left:1909px;top:109px;width:2px;height:869px;background:#8a8a8a"></div>
<div class="p " style="left:1917px;top:93px;width:2px;height:943px;background:#e4e4e4"></div>
<div class="p " style="left:2px;top:94px;width:1895px;height:3px;background:#fdfdfd"></div>
<div class="p " style="left:5px;top:97px;width:1300px;height:57px;background:#ebebeb;border:2px solid #727272"></div>
<div class="p " style="left:7px;top:99px;width:1296px;height:8px;background:#727272"></div>
<div class="p " style="left:7px;top:99px;width:1296px;height:17px;background:linear-gradient(90deg,#e1e8f4,#edf2fa);border-bottom:1px solid #8c8c8c;border-radius:6px 6px 0 0"></div>
<div class="t " style="left:12px;top:102px;font-weight:bold;font-size:12.5px;letter-spacing:0.5px;color:#3d3a3a">View</div>
<div class="p " style="left:1311px;top:97px;width:306px;height:57px;background:#ebebeb;border:2px solid #727272"></div>
<div class="p " style="left:1313px;top:99px;width:302px;height:8px;background:#727272"></div>
<div class="p " style="left:1313px;top:99px;width:302px;height:17px;background:linear-gradient(90deg,#e1e8f4,#edf2fa);border-bottom:1px solid #8c8c8c;border-radius:6px 6px 0 0"></div>
<div class="t " style="left:1318px;top:102px;font-weight:bold;font-size:12.5px;letter-spacing:0.5px;color:#3d3a3a">Sensor</div>
<div class="p " style="left:1621px;top:97px;width:120px;height:57px;background:#ebebeb;border:2px solid #727272"></div>
<div class="p " style="left:1623px;top:99px;width:116px;height:8px;background:#727272"></div>
<div class="p " style="left:1623px;top:99px;width:116px;height:17px;background:linear-gradient(90deg,#e1e8f4,#edf2fa);border-bottom:1px solid #8c8c8c;border-radius:6px 6px 0 0"></div>
<div class="t " style="left:1628px;top:102px;font-weight:bold;font-size:12.5px;letter-spacing:0.5px;color:#3d3a3a">Generator</div>
<div class="p " style="left:1745px;top:97px;width:151px;height:57px;background:#ebebeb;border:2px solid #727272"></div>
<div class="p " style="left:1747px;top:99px;width:147px;height:8px;background:#727272"></div>
<div class="p " style="left:1747px;top:99px;width:147px;height:17px;background:linear-gradient(90deg,#e1e8f4,#edf2fa);border-bottom:1px solid #8c8c8c;border-radius:6px 6px 0 0"></div>
<div class="t " style="left:1752px;top:102px;font-weight:bold;font-size:12.5px;letter-spacing:0.5px;color:#3d3a3a">Parameters</div>
<div class="p " style="left:1305px;top:94px;width:1px;height:61px;background:#fdfdfd"></div>
<div class="p " style="left:1306px;top:94px;width:2px;height:61px;background:#747474"></div>
<div class="p " style="left:1308px;top:94px;width:1px;height:61px;background:#fdfdfd"></div>
<div class="p " style="left:1617px;top:94px;width:1px;height:61px;background:#fdfdfd"></div>
<div class="p " style="left:1618px;top:94px;width:2px;height:61px;background:#747474"></div>
<div class="p " style="left:1620px;top:94px;width:1px;height:61px;background:#fdfdfd"></div>
<div class="p " style="left:1741px;top:94px;width:1px;height:61px;background:#fdfdfd"></div>
<div class="p " style="left:1742px;top:94px;width:2px;height:61px;background:#747474"></div>
<div class="p " style="left:1744px;top:94px;width:1px;height:61px;background:#fdfdfd"></div>
<div class="p " style="left:1896px;top:93px;width:5px;height:930px;background:#8a8a8a"></div>
<div class="p " style="left:1897px;top:93px;width:1px;height:930px;background:#a8a8a8"></div>
<div class="p " style="left:2px;top:154px;width:1895px;height:1px;background:#fdfdfd"></div>
<div class="p " style="left:2px;top:155px;width:1895px;height:4px;background:#6f6f6f"></div>
<div class="p " style="left:2px;top:155px;width:1895px;height:1px;background:#8a8a8a"></div>
<div class="p " style="left:2px;top:159px;width:1895px;height:3px;background:#fdfdfd"></div>
<div class="p " style="left:7px;top:120px;width:199px;height:23px;background:#fff;border-top:2px solid #6d6d6d;border-left:2px solid #6d6d6d;border-bottom:1px solid #f4f4f4;border-right:1px solid #dcdcdc"></div>
<div class="t " style="left:11px;top:125px;font-size:14px;color:#050505">Near black scale</div>
<div class="p " style="left:188px;top:122px;width:16px;height:19px;background:#ebebeb;border-right:2px solid #6d6d6d;border-bottom:2px solid #6d6d6d;border-top:1px solid #fff;border-left:1px solid #fff"></div>
<svg style="left:193px;top:130px" width="8" height="5" viewBox="0 0 8 5"><path d="M0 0 H8 L4 4.5 Z" fill="#000"/></svg>
<div class="p " style="left:216px;top:118px;width:1056px;height:28px;background:#f0f0f0;border-top:1px solid #8a8a8a;border-left:1px solid #8a8a8a;border-bottom:1px solid #fff;border-right:1px solid #fff"></div>
<div class="t " style="left:218px;top:120px;font-weight:bold;font-size:16px;color:#000">Color Space: HDTV Rec709 , White Point: D65, EOTF:&nbsp; SDR, Power law (black compensation) w/gamma = 2.40, # of measures: 0 [20:12:19]</div>
<div class="p " style="left:1278px;top:120px;width:17px;height:12px;background:#f0f0f0;border-right:2px solid #717171;border-bottom:2px solid #717171;border-top:1px solid #fff;border-left:1px solid #fff"></div>
<svg style="left:1283px;top:124px" width="6" height="4" viewBox="0 0 6 4"><path d="M0 3.5 H6 L3 0 Z" fill="#000"/></svg>
<div class="p " style="left:1278px;top:133px;width:17px;height:12px;background:#f0f0f0;border-right:2px solid #717171;border-bottom:2px solid #717171;border-top:1px solid #fff;border-left:1px solid #fff"></div>
<svg style="left:1283px;top:137px" width="6" height="4" viewBox="0 0 6 4"><path d="M0 0 H6 L3 3.5 Z" fill="#000"/></svg>
<div class="p " style="left:1314px;top:117px;width:295px;height:16px;background:#efefef"></div>
<div class="t " style="left:1316px;top:117.5px;font-size:14px;color:#050505">Simulated sensor</div>
<div class="p " style="left:1317px;top:134px;width:68px;height:17px;background:#efefef"></div>
<div class="t " style="left:1318px;top:134.5px;font-size:14px;color:#050505">Adaptive</div>
<svg style="left:1424px;top:136px" width="12" height="12" viewBox="0 0 12 12"><path d="M0.5 0.5 L11.5 6 L0.5 11.5 Z" fill="#6ad34a" stroke="#4a9a3a" stroke-width="0.6"/></svg>
<svg style="left:1587px;top:132px" width="17" height="18" viewBox="0 0 17 18"><defs><linearGradient id="edg" x1="0" y1="0" x2="1" y2="1"><stop offset="0" stop-color="#f4f8ff"/><stop offset="1" stop-color="#a8c4ec"/></linearGradient></defs><path d="M1 3 Q1 1 3 1 H11 Q13 1 13 3 V15 Q13 17 11 17 H3 Q1 17 1 15 Z" fill="#2a62c0" stroke="#183e88" stroke-width="0.8"/><rect x="3" y="3" width="8" height="12" fill="url(#edg)"/><path d="M4 9 L6 12 L9 6" fill="none" stroke="#e8c040" stroke-width="1.1"/><path d="M7 12 L15 7" stroke="#6a7ab0" stroke-width="1.8"/><circle cx="15.5" cy="6.5" r="1.2" fill="#e04030"/></svg>
<div class="p " style="left:1624px;top:118px;width:114px;height:16px;background:#efefef"></div>
<div class="t " style="left:1624px;top:117.5px;font-size:14px;color:#050505">Raspberry Pi</div>
<svg style="left:1718px;top:134px" width="17" height="18" viewBox="0 0 17 18"><defs><linearGradient id="edg" x1="0" y1="0" x2="1" y2="1"><stop offset="0" stop-color="#f4f8ff"/><stop offset="1" stop-color="#a8c4ec"/></linearGradient></defs><path d="M1 3 Q1 1 3 1 H11 Q13 1 13 3 V15 Q13 17 11 17 H3 Q1 17 1 15 Z" fill="#2a62c0" stroke="#183e88" stroke-width="0.8"/><rect x="3" y="3" width="8" height="12" fill="url(#edg)"/><path d="M4 9 L6 12 L9 6" fill="none" stroke="#e8c040" stroke-width="1.1"/><path d="M7 12 L15 7" stroke="#6a7ab0" stroke-width="1.8"/><circle cx="15.5" cy="6.5" r="1.2" fill="#e04030"/></svg>
<div class="p " style="left:1754px;top:118px;width:115px;height:16px;background:#efefef"></div>
<div class="p " style="left:1754px;top:119px;width:12px;height:12px;background:#fff;border-top:2px solid #555;border-left:2px solid #555;border-right:1px solid #e8e8e8;border-bottom:1px solid #e8e8e8"></div>
<div class="t " style="left:1773px;top:118px;font-size:14px;color:#050505">Reference</div>
<div class="p " style="left:1754px;top:136px;width:135px;height:16px;background:#efefef"></div>
<div class="p " style="left:1754px;top:136px;width:12px;height:12px;background:#f0f0f0;border-top:2px solid #a0a0a0;border-left:2px solid #a0a0a0;border-right:1px solid #f8f8f8;border-bottom:1px solid #f8f8f8"></div>
<div class="t " style="left:1773px;top:135px;font-size:14px;color:#b4b4b4">XYZ Adjustment</div>
<div class="p " style="left:5px;top:162px;width:1805px;height:216px;background:#ebebeb;border:2px solid #727272"></div>
<div class="p " style="left:7px;top:164px;width:1799px;height:8px;background:#727272"></div>
<div class="p " style="left:7px;top:164px;width:1799px;height:14px;background:linear-gradient(90deg,#e1e8f4,#edf2fa);border-radius:6px 6px 0 0"></div>
<div class="p " style="left:6px;top:167px;width:1px;height:210px;background:#00e000"></div>
<div class="p " style="left:7px;top:167px;width:1px;height:209px;background:#fbf4fb"></div>
<div class="p " style="left:6px;top:376px;width:1802px;height:1px;background:#00e000"></div>
<div class="p " style="left:7px;top:375px;width:1800px;height:1px;background:#fbf4fb"></div>
<div class="p " style="left:1807px;top:167px;width:1px;height:210px;background:#00e000"></div>
<div class="p " style="left:1790px;top:179px;width:17px;height:1px;background:#00e000"></div>
<div class="t " style="left:15px;top:166px;font-weight:bold;font-size:11px;color:#3d3a3a">( Average dE: 1.80 [0.12,1.80,0.00] max: 2.00 [CIE2000] ) [Absolute Y w/gamma]</div>
<div class="p " style="left:8px;top:176px;width:1782px;height:197px;background:#f0f0f0;border-top:2px solid #6d6d6d;border-left:2px solid #6d6d6d;border-right:1px solid #fff;border-bottom:1px solid #fff"></div>
<div class="p " style="left:10px;top:178px;width:55px;height:22px;background:#f0f0f0;border-right:1px solid #6d6d6d"></div>
<div class="t " style="left:10px;top:183.5px;width:55px;text-align:center;font-weight:bold;font-size:12px;letter-spacing:-0.3px;color:#000">% White</div>
<div class="p " style="left:10px;top:200px;width:55px;height:26px;background:#f0f0f0;border-right:1px solid #6d6d6d"></div>
<div class="t " style="left:10px;top:207.5px;width:55px;text-align:center;font-weight:bold;font-size:12px;letter-spacing:-0.3px;color:#000">x</div>
<div class="p " style="left:10px;top:226px;width:55px;height:26px;background:#f0f0f0;border-right:1px solid #6d6d6d"></div>
<div class="t " style="left:10px;top:233.5px;width:55px;text-align:center;font-weight:bold;font-size:12px;letter-spacing:-0.3px;color:#000">y</div>
<div class="p " style="left:10px;top:252px;width:55px;height:26px;background:#f0f0f0;border-right:1px solid #6d6d6d"></div>
<div class="t " style="left:10px;top:259.5px;width:55px;text-align:center;font-weight:bold;font-size:12px;letter-spacing:-0.3px;color:#000">Y</div>
<div class="p " style="left:10px;top:278px;width:55px;height:26px;background:#f0f0f0;border-right:1px solid #6d6d6d"></div>
<div class="t " style="left:10px;top:285.5px;width:55px;text-align:center;font-weight:bold;font-size:12px;letter-spacing:-0.3px;color:#000">Delta E</div>
<div class="p " style="left:10px;top:304px;width:55px;height:25px;background:#f0f0f0;border-right:1px solid #6d6d6d"></div>
<div class="t " style="left:10px;top:310.5px;width:55px;text-align:center;font-weight:bold;font-size:12px;letter-spacing:-0.3px;color:#000">delta xy</div>
<div class="p " style="left:10px;top:329px;width:55px;height:25px;background:#f0f0f0;border-right:1px solid #6d6d6d"></div>
<div class="t " style="left:10px;top:335.5px;width:55px;text-align:center;font-weight:bold;font-size:12px;letter-spacing:-0.3px;color:#000">Y target</div>
<div class="p " style="left:10px;top:200px;width:55px;height:1px;background:#6d6d6d"></div>
<div class="p " style="left:10px;top:226px;width:55px;height:1px;background:#6d6d6d"></div>
<div class="p " style="left:10px;top:252px;width:55px;height:1px;background:#6d6d6d"></div>
<div class="p " style="left:10px;top:278px;width:55px;height:1px;background:#6d6d6d"></div>
<div class="p " style="left:10px;top:304px;width:55px;height:1px;background:#6d6d6d"></div>
<div class="p " style="left:10px;top:329px;width:55px;height:1px;background:#6d6d6d"></div>
<div class="p " style="left:10px;top:354px;width:55px;height:1px;background:#6d6d6d"></div>
<div class="p " style="left:65px;top:178px;width:339px;height:23px;background:#808080;border-top:1px solid #fff;border-left:1px solid #fff;border-right:1px solid #6d6d6d;border-bottom:1px solid #6d6d6d"></div>
<div class="t " style="left:65px;top:184px;width:339px;text-align:center;font-weight:bold;font-size:12px">0</div>
<div class="p " style="left:405px;top:178px;width:339px;height:23px;background:#999999;border-top:1px solid #fff;border-left:1px solid #fff;border-right:1px solid #6d6d6d;border-bottom:1px solid #6d6d6d"></div>
<div class="t " style="left:405px;top:184px;width:339px;text-align:center;font-weight:bold;font-size:12px">1</div>
<div class="p " style="left:745px;top:178px;width:341px;height:23px;background:#b3b3b3;border-top:1px solid #fff;border-left:1px solid #fff;border-right:1px solid #6d6d6d;border-bottom:1px solid #6d6d6d"></div>
<div class="t " style="left:745px;top:184px;width:341px;text-align:center;font-weight:bold;font-size:12px">2</div>
<div class="p " style="left:1087px;top:178px;width:344px;height:23px;background:#cccccc;border-top:1px solid #fff;border-left:1px solid #fff;border-right:1px solid #6d6d6d;border-bottom:1px solid #6d6d6d"></div>
<div class="t " style="left:1087px;top:184px;width:344px;text-align:center;font-weight:bold;font-size:12px">3</div>
<div class="p " style="left:1432px;top:178px;width:338px;height:23px;background:#e1e1e1;border-top:1px solid #fff;border-left:1px solid #fff;border-right:1px solid #6d6d6d;border-bottom:1px solid #6d6d6d"></div>
<div class="t " style="left:1432px;top:184px;width:338px;text-align:center;font-weight:bold;font-size:12px">4</div>
<div class="p " style="left:65px;top:201px;width:340px;height:26px;background:#ffffff;border-right:1px solid #c0c0c0;border-bottom:1px solid #c0c0c0"></div>
<div class="t " style="left:65px;top:209px;font-size:12px;letter-spacing:-0.55px;color:#000;text-align:right;width:338px">0.2442</div>
<div class="p " style="left:405px;top:201px;width:340px;height:26px;background:#ffffff;border-right:1px solid #c0c0c0;border-bottom:1px solid #c0c0c0"></div>
<div class="t " style="left:405px;top:209px;font-size:12px;letter-spacing:-0.55px;color:#000;text-align:right;width:338px">0.2469</div>
<div class="p " style="left:745px;top:201px;width:342px;height:26px;background:#ffffff;border-right:1px solid #c0c0c0;border-bottom:1px solid #c0c0c0"></div>
<div class="t " style="left:745px;top:209px;font-size:12px;letter-spacing:-0.55px;color:#000;text-align:right;width:340px">0.2507</div>
<div class="p " style="left:1087px;top:201px;width:345px;height:26px;background:#ffffff;border-right:1px solid #c0c0c0;border-bottom:1px solid #c0c0c0"></div>
<div class="t " style="left:1087px;top:209px;font-size:12px;letter-spacing:-0.55px;color:#000;text-align:right;width:343px">0.2600</div>
<div class="p " style="left:1432px;top:201px;width:339px;height:26px;background:#ffffff;border-right:1px solid #c0c0c0;border-bottom:1px solid #c0c0c0"></div>
<div class="t " style="left:1432px;top:209px;font-size:12px;letter-spacing:-0.55px;color:#000;text-align:right;width:337px">0.2681</div>
<div class="p " style="left:65px;top:227px;width:340px;height:26px;background:#ffffff;border-right:1px solid #c0c0c0;border-bottom:1px solid #c0c0c0"></div>
<div class="t " style="left:65px;top:235px;font-size:12px;letter-spacing:-0.55px;color:#000;text-align:right;width:338px">0.2173</div>
<div class="p " style="left:405px;top:227px;width:340px;height:26px;background:#ffffff;border-right:1px solid #c0c0c0;border-bottom:1px solid #c0c0c0"></div>
<div class="t " style="left:405px;top:235px;font-size:12px;letter-spacing:-0.55px;color:#000;text-align:right;width:338px">0.2230</div>
<div class="p " style="left:745px;top:227px;width:342px;height:26px;background:#ffffff;border-right:1px solid #c0c0c0;border-bottom:1px solid #c0c0c0"></div>
<div class="t " style="left:745px;top:235px;font-size:12px;letter-spacing:-0.55px;color:#000;text-align:right;width:340px">0.2295</div>
<div class="p " style="left:1087px;top:227px;width:345px;height:26px;background:#ffffff;border-right:1px solid #c0c0c0;border-bottom:1px solid #c0c0c0"></div>
<div class="t " style="left:1087px;top:235px;font-size:12px;letter-spacing:-0.55px;color:#000;text-align:right;width:343px">0.2437</div>
<div class="p " style="left:1432px;top:227px;width:339px;height:26px;background:#ffffff;border-right:1px solid #c0c0c0;border-bottom:1px solid #c0c0c0"></div>
<div class="t " style="left:1432px;top:235px;font-size:12px;letter-spacing:-0.55px;color:#000;text-align:right;width:337px">0.2577</div>
<div class="p " style="left:65px;top:253px;width:340px;height:26px;background:#ffffff;border-right:1px solid #c0c0c0;border-bottom:1px solid #c0c0c0"></div>
<div class="t " style="left:65px;top:261px;font-size:12px;letter-spacing:-0.55px;color:#000;text-align:right;width:338px">0.089</div>
<div class="p " style="left:405px;top:253px;width:340px;height:26px;background:#ffffff;border-right:1px solid #c0c0c0;border-bottom:1px solid #c0c0c0"></div>
<div class="t " style="left:405px;top:261px;font-size:12px;letter-spacing:-0.55px;color:#000;text-align:right;width:338px">0.124</div>
<div class="p " style="left:745px;top:253px;width:342px;height:26px;background:#ffffff;border-right:1px solid #c0c0c0;border-bottom:1px solid #c0c0c0"></div>
<div class="t " style="left:745px;top:261px;font-size:12px;letter-spacing:-0.55px;color:#000;text-align:right;width:340px">0.131</div>
<div class="p " style="left:1087px;top:253px;width:345px;height:26px;background:#ffffff;border-right:1px solid #c0c0c0;border-bottom:1px solid #c0c0c0"></div>
<div class="t " style="left:1087px;top:261px;font-size:12px;letter-spacing:-0.55px;color:#000;text-align:right;width:343px">0.146</div>
<div class="p " style="left:1432px;top:253px;width:339px;height:26px;background:#ffffff;border-right:1px solid #c0c0c0;border-bottom:1px solid #c0c0c0"></div>
<div class="t " style="left:1432px;top:261px;font-size:12px;letter-spacing:-0.55px;color:#000;text-align:right;width:337px">0.163</div>
<div class="p " style="left:65px;top:279px;width:340px;height:26px;background:#e0e0e0;border-right:1px solid #c0c0c0;border-bottom:1px solid #c0c0c0"></div>
<div class="p " style="left:405px;top:279px;width:340px;height:26px;background:#ffffb0;border-right:1px solid #c0c0c0;border-bottom:1px solid #c0c0c0"></div>
<div class="t " style="left:405px;top:287px;font-size:12px;letter-spacing:-0.55px;color:#000;text-align:right;width:338px;font-weight:bold;letter-spacing:-0.2px">2.0</div>
<div class="p " style="left:745px;top:279px;width:342px;height:26px;background:#b0ffb0;border-right:1px solid #c0c0c0;border-bottom:1px solid #c0c0c0"></div>
<div class="t " style="left:745px;top:287px;font-size:12px;letter-spacing:-0.55px;color:#000;text-align:right;width:340px;font-weight:bold;letter-spacing:-0.2px">1.9</div>
<div class="p " style="left:1087px;top:279px;width:345px;height:26px;background:#b0ffb0;border-right:1px solid #c0c0c0;border-bottom:1px solid #c0c0c0"></div>
<div class="t " style="left:1087px;top:287px;font-size:12px;letter-spacing:-0.55px;color:#000;text-align:right;width:343px;font-weight:bold;letter-spacing:-0.2px">1.7</div>
<div class="p " style="left:1432px;top:279px;width:339px;height:26px;background:#b0ffb0;border-right:1px solid #c0c0c0;border-bottom:1px solid #c0c0c0"></div>
<div class="t " style="left:1432px;top:287px;font-size:12px;letter-spacing:-0.55px;color:#000;text-align:right;width:337px;font-weight:bold;letter-spacing:-0.2px">1.5</div>
<div class="p " style="left:65px;top:305px;width:340px;height:25px;background:#f0f0f0;border-right:1px solid #c0c0c0;border-bottom:1px solid #c0c0c0"></div>
<div class="p " style="left:405px;top:305px;width:340px;height:25px;background:#f0f0f0;border-right:1px solid #c0c0c0;border-bottom:1px solid #c0c0c0"></div>
<div class="t " style="left:405px;top:312px;font-size:12px;letter-spacing:-0.55px;color:#000;text-align:right;width:338px">0.1247</div>
<div class="p " style="left:745px;top:305px;width:342px;height:25px;background:#f0f0f0;border-right:1px solid #c0c0c0;border-bottom:1px solid #c0c0c0"></div>
<div class="t " style="left:745px;top:312px;font-size:12px;letter-spacing:-0.55px;color:#000;text-align:right;width:340px">0.1173</div>
<div class="p " style="left:1087px;top:305px;width:345px;height:25px;background:#f0f0f0;border-right:1px solid #c0c0c0;border-bottom:1px solid #c0c0c0"></div>
<div class="t " style="left:1087px;top:312px;font-size:12px;letter-spacing:-0.55px;color:#000;text-align:right;width:343px">0.1003</div>
<div class="p " style="left:1432px;top:305px;width:339px;height:25px;background:#f0f0f0;border-right:1px solid #c0c0c0;border-bottom:1px solid #c0c0c0"></div>
<div class="t " style="left:1432px;top:312px;font-size:12px;letter-spacing:-0.55px;color:#000;text-align:right;width:337px">0.0841</div>
<div class="p " style="left:65px;top:330px;width:340px;height:25px;background:#e0e0e0;border-right:1px solid #c0c0c0;border-bottom:1px solid #c0c0c0"></div>
<div class="t " style="left:65px;top:337px;font-size:12px;letter-spacing:-0.55px;color:#000;text-align:right;width:338px">0.089</div>
<div class="p " style="left:405px;top:330px;width:340px;height:25px;background:#e0e0e0;border-right:1px solid #c0c0c0;border-bottom:1px solid #c0c0c0"></div>
<div class="t " style="left:405px;top:337px;font-size:12px;letter-spacing:-0.55px;color:#000;text-align:right;width:338px">0.090</div>
<div class="p " style="left:745px;top:330px;width:342px;height:25px;background:#e0e0e0;border-right:1px solid #c0c0c0;border-bottom:1px solid #c0c0c0"></div>
<div class="t " style="left:745px;top:337px;font-size:12px;letter-spacing:-0.55px;color:#000;text-align:right;width:340px">0.097</div>
<div class="p " style="left:1087px;top:330px;width:345px;height:25px;background:#e0e0e0;border-right:1px solid #c0c0c0;border-bottom:1px solid #c0c0c0"></div>
<div class="t " style="left:1087px;top:337px;font-size:12px;letter-spacing:-0.55px;color:#000;text-align:right;width:343px">0.120</div>
<div class="p " style="left:1432px;top:330px;width:339px;height:25px;background:#e0e0e0;border-right:1px solid #c0c0c0;border-bottom:1px solid #c0c0c0"></div>
<div class="t " style="left:1432px;top:337px;font-size:12px;letter-spacing:-0.55px;color:#000;text-align:right;width:337px">0.147</div>
<div class="p " style="left:1771px;top:178px;width:18px;height:177px;background:#f0f0f0"></div>
<svg style="left:1774px;top:182px" width="11" height="7" viewBox="0 0 11 7"><path d="M0 6.5 H11 L5.5 0 Z" fill="#a0a0a0"/></svg>
<svg style="left:1774px;top:342px" width="11" height="7" viewBox="0 0 11 7"><path d="M0 0 H11 L5.5 6.5 Z" fill="#a0a0a0"/></svg>
<div class="p " style="left:1789px;top:180px;width:17px;height:195px;background:#e8e8e8"></div>
<div class="p " style="left:10px;top:355px;width:1779px;height:17px;background:#f0f0f0"></div>
<svg style="left:15px;top:360px" width="7" height="10" viewBox="0 0 7 10"><path d="M6.5 0 V10 L0 5 Z" fill="#a0a0a0"/></svg>
<svg style="left:1760px;top:360px" width="7" height="10" viewBox="0 0 7 10"><path d="M0 0 V10 L6.5 5 Z" fill="#a0a0a0"/></svg>
<div class="p " style="left:1812px;top:162px;width:85px;height:216px;background:#8a8a8a"></div>
<div class="p " style="left:1811px;top:159px;width:2px;height:219px;background:#fdfdfd"></div>
<div class="p " style="left:1812px;top:159px;width:3px;height:220px;background:#fdfdfd"></div>
<div class="p " style="left:1815px;top:162px;width:81px;height:100px;background:#ebebeb;border:2px solid #727272"></div>
<div class="p " style="left:1817px;top:164px;width:77px;height:8px;background:#727272"></div>
<div class="p " style="left:1817px;top:164px;width:77px;height:16px;background:linear-gradient(90deg,#e1e8f4,#edf2fa);border-bottom:1px solid #8c8c8c;border-radius:6px 6px 0 0"></div>
<div class="t " style="left:1821px;top:166px;font-weight:bold;font-size:12.5px;letter-spacing:0.5px;color:#3d3a3a">Display</div>
<div class="p " style="left:1820px;top:181px;width:70px;height:15px;background:#efefef"></div>
<svg style="left:1822px;top:182px" width="12" height="12" viewBox="0 0 12 12"><circle cx="6" cy="6" r="5" fill="#f0f0f0" stroke="#e4e4e4" stroke-width="1"/><path d="M2.2 9.5 A5 5 0 0 1 9.5 2.2" fill="none" stroke="#a0a0a0" stroke-width="1.3"/></svg>
<div class="t " style="left:1841px;top:182px;font-size:13px;color:#a8a8a8">Sensor</div>
<div class="p " style="left:1820px;top:197px;width:70px;height:15px;background:#efefef"></div>
<svg style="left:1822px;top:198px" width="12" height="12" viewBox="0 0 12 12"><circle cx="6" cy="6" r="5" fill="#fff" stroke="#e4e4e4" stroke-width="1"/><path d="M2.2 9.5 A5 5 0 0 1 9.5 2.2" fill="none" stroke="#6a6a6a" stroke-width="1.3"/></svg>
<div class="t " style="left:1841px;top:198px;font-size:13px;color:#000">RGB</div>
<div class="p " style="left:1820px;top:213px;width:70px;height:15px;background:#efefef"></div>
<svg style="left:1822px;top:214px" width="12" height="12" viewBox="0 0 12 12"><circle cx="6" cy="6" r="5" fill="#fff" stroke="#e4e4e4" stroke-width="1"/><path d="M2.2 9.5 A5 5 0 0 1 9.5 2.2" fill="none" stroke="#6a6a6a" stroke-width="1.3"/></svg>
<div class="t " style="left:1841px;top:214px;font-size:13px;color:#000">XYZ</div>
<div class="p " style="left:1820px;top:229px;width:70px;height:15px;background:#efefef"></div>
<svg style="left:1822px;top:230px" width="12" height="12" viewBox="0 0 12 12"><circle cx="6" cy="6" r="5" fill="#fff" stroke="#e4e4e4" stroke-width="1"/><path d="M2.2 9.5 A5 5 0 0 1 9.5 2.2" fill="none" stroke="#6a6a6a" stroke-width="1.3"/></svg>
<div class="t " style="left:1841px;top:230px;font-size:13px;color:#000">xyz</div>
<div class="p " style="left:1820px;top:244px;width:70px;height:15px;background:#efefef"></div>
<svg style="left:1822px;top:245px" width="12" height="12" viewBox="0 0 12 12"><circle cx="6" cy="6" r="5" fill="#fff" stroke="#e4e4e4" stroke-width="1"/><path d="M2.2 9.5 A5 5 0 0 1 9.5 2.2" fill="none" stroke="#6a6a6a" stroke-width="1.3"/><circle cx="6" cy="6" r="2" fill="#000"/></svg>
<div class="t " style="left:1841px;top:245px;font-size:13px;color:#000">xyY</div>
<div class="p " style="left:1812px;top:264px;width:83px;height:30px;background:#ebebeb;border-top:1px solid #fff;border-left:1px solid #fff;border-right:2px solid #737373;border-bottom:2px solid #737373"></div>
<div class="t " style="left:1862px;top:272px;font-size:13.5px;color:#000">Go</div>
<svg style="left:1818px;top:267px" width="32" height="26" viewBox="0 0 32 26"><rect x="0" y="0" width="3" height="21" fill="#222"/><rect x="29" y="4" width="3" height="22" fill="#222"/><g fill="#eee"><rect x="1" y="1" width="1" height="1.5"/><rect x="1" y="4" width="1" height="1.5"/><rect x="1" y="7" width="1" height="1.5"/><rect x="1" y="10" width="1" height="1.5"/><rect x="1" y="13" width="1" height="1.5"/><rect x="1" y="16" width="1" height="1.5"/><rect x="1" y="19" width="1" height="1.5"/><rect x="30" y="5" width="1" height="1.5"/><rect x="30" y="8" width="1" height="1.5"/><rect x="30" y="11" width="1" height="1.5"/><rect x="30" y="14" width="1" height="1.5"/><rect x="30" y="17" width="1" height="1.5"/><rect x="30" y="20" width="1" height="1.5"/><rect x="30" y="23" width="1" height="1.5"/></g><path d="M3 1 H8 Q5 6 6 12 Q7 18 11 21 H3 Z" fill="#e8e8e8" stroke="#555" stroke-width="0.6"/><path d="M22 4 H29 V25 H26 Q24 18 23 12 Q22 7 22 4 Z" fill="#e0e0e0" stroke="#555" stroke-width="0.6"/><path d="M8 0 H18 Q20 8 24 14 Q27 19 28 25 H15 Q12 18 10 12 Q8 6 8 0 Z" fill="#1c1c2a" stroke="#111" stroke-width="0.8"/><path d="M10 3 H16 L17 8 H11 Z M12 10 H19 L21 15 H14 Z M15 17 H23 L25 22 H17 Z" fill="#3a3a50"/><rect x="4" y="5" width="4" height="1.5" fill="#222"/><rect x="24" y="13" width="4" height="1.5" fill="#222"/></svg>
<div class="p " style="left:1812px;top:294px;width:83px;height:30px;background:#ebebeb;border-top:1px solid #fff;border-left:1px solid #fff;border-right:2px solid #737373;border-bottom:2px solid #737373"></div>
<div class="t " style="left:1851px;top:302px;font-size:13.5px;color:#000">Delete</div>
<svg style="left:1819px;top:296px" width="29" height="27" viewBox="0 0 29 27"><defs><linearGradient id="binb" x1="0" y1="0" x2="1" y2="1"><stop offset="0" stop-color="#e8f8ff"/><stop offset="0.6" stop-color="#8cc8f0"/><stop offset="1" stop-color="#3a80c8"/></linearGradient></defs><path d="M0.5 4 Q14 0 28 1 L24 24 Q14 28 5 25 Z" fill="url(#binb)" stroke="#5a9ad0" stroke-width="0.7"/><path d="M5 22 Q14 16 25 19" fill="none" stroke="#c8e8ff" stroke-width="1.5"/><path d="M12 14 A6 6 0 0 1 21 9 L22 6 L23 13 L17 12 L19.5 11 A4 4 0 0 0 14.5 14 Z" fill="#10a020"/><path d="M21 15 A6 6 0 0 1 12 20 L11 23 L10 16 L16 17 L13.5 18 A4 4 0 0 0 18.5 15 Z" fill="#10a020"/></svg>
<div class="p " style="left:1812px;top:324px;width:83px;height:30px;background:#ebebeb;border-top:1px solid #fff;border-left:1px solid #fff;border-right:2px solid #737373;border-bottom:2px solid #737373"></div>
<div class="t " style="left:1858px;top:332px;font-size:13.5px;color:#000">Refs</div>
<svg style="left:1818px;top:329px" width="32" height="23" viewBox="0 0 32 23"><path d="M0 23 V8 L2 7 L4 5 L6 4 L6 2 L8 1 L9 3 L10 3 L11 5 L13 4 L14 6 L15 7 L17 6 L17 3 L19 0 L21 1 L22 3 L23 3 L24 6 L26 8 L27 7 L29 7 L30 9 L32 9 V23 Z" fill="#ff0"/><rect x="0" y="9" width="3" height="14" fill="#000070"/><rect x="3" y="8" width="3" height="15" fill="#f0f"/><rect x="6" y="4" width="4" height="19" fill="#00f"/><rect x="10" y="6" width="3" height="17" fill="#0ff"/><rect x="13" y="8" width="4" height="15" fill="#0f0"/><rect x="17" y="2" width="5" height="21" fill="#ff0"/><rect x="22" y="5" width="3" height="18" fill="#700000"/><rect x="25" y="9" width="7" height="14" fill="#f00"/></svg>
<div class="p " style="left:1818px;top:358px;width:56px;height:18px;background:#f4f4f4"></div>
<div class="p " style="left:1820px;top:360px;width:13px;height:13px;background:#fff;border-top:2px solid #555;border-left:2px solid #555;border-right:1px solid #e8e8e8;border-bottom:1px solid #e8e8e8"></div>
<div class="t " style="left:1838px;top:360px;font-size:14px">Edit</div>
<div class="p " style="left:2px;top:378px;width:1895px;height:2px;background:#fdfdfd"></div>
<div class="p " style="left:2px;top:380px;width:1895px;height:4px;background:#8a8a8a"></div>
<div class="p " style="left:2px;top:380px;width:1895px;height:1px;background:#6f6f6f"></div>
<div class="p " style="left:2px;top:384px;width:1895px;height:3px;background:#fdfdfd"></div>
<div class="p " style="left:5px;top:387px;width:378px;height:629px;background:#ebebeb;border:2px solid #727272"></div>
<div class="p " style="left:7px;top:389px;width:374px;height:8px;background:#727272"></div>
<div class="p " style="left:7px;top:389px;width:374px;height:17px;background:linear-gradient(90deg,#e1e8f4,#edf2fa);border-bottom:1px solid #8c8c8c;border-radius:6px 6px 0 0"></div>
<div class="t " style="left:12px;top:392px;font-weight:bold;font-size:12.5px;letter-spacing:0.5px;color:#3d3a3a">Selected color</div>
<div class="p " style="left:384px;top:384px;width:3px;height:640px;background:#8a8a8a"></div>
<div class="p " style="left:383px;top:387px;width:1px;height:629px;background:#fdfdfd"></div>
<div class="p " style="left:387px;top:387px;width:1px;height:629px;background:#fdfdfd"></div>
<div class="p " style="left:16px;top:408px;width:110px;height:17px;background:#f0f0f0"></div>
<div class="t " style="left:18px;top:410px;font-size:13.5px;color:#050505">RGB Levels</div>
<div class="p " style="left:236px;top:406px;width:126px;height:16px;background:#f0f0f0"></div>
<div class="t " style="left:241px;top:408px;font-size:13.5px;color:#050505">Current Measure</div>
<div class="p " style="left:14px;top:427px;width:193px;height:180px;background:#f0f0f0"></div>
<svg style="left:14px;top:476px" width="201" height="3"><line x1="0" y1="1.5" x2="201" y2="1.5" stroke="#777" stroke-width="1" stroke-dasharray="3,3"/></svg>
<svg style="left:14px;top:476px" width="201" height="44" viewBox="0 0 201 44"><rect x="0" y="38" width="201" height="5" fill="#000"/><path d="M0 38 Q25 27 50 38 Z" fill="#a00000" stroke="#000" stroke-width="1.3"/><path d="M50 38 Q75 27 100 38 Z" fill="#00a000" stroke="#000" stroke-width="1.3"/><path d="M100 38 Q125 27 150 38 Z" fill="#0000b0" stroke="#000" stroke-width="1.3"/><path d="M150 38 Q175 27 200 38 Z" fill="#c08a10" stroke="#000" stroke-width="1.3"/></svg>
<div class="t " style="left:8px;top:496px;width:60px;text-align:center;font-family:'Liberation Serif',serif;font-weight:bold;font-size:12px;color:#050505">0.0%</div>
<div class="t " style="left:59px;top:496px;width:60px;text-align:center;font-family:'Liberation Serif',serif;font-weight:bold;font-size:12px;color:#050505">0.0%</div>
<div class="t " style="left:110px;top:496px;width:60px;text-align:center;font-family:'Liberation Serif',serif;font-weight:bold;font-size:12px;color:#050505">0.0%</div>
<div class="t " style="left:162px;top:496px;width:60px;text-align:center;font-family:'Liberation Serif',serif;font-weight:bold;font-size:12px;color:#050505">dE 0.0</div>
<div class="p " style="left:16px;top:533px;width:190px;height:74px;background:#f2f2f2"></div>
<div class="t " style="left:35px;top:535px;font-weight:bold;font-size:13.5px;color:#050505;letter-spacing:0.4px">Measure</div>
<div class="t " style="left:127px;top:535px;font-weight:bold;font-size:13.5px;color:#050505;letter-spacing:0.4px">Reference</div>
<div class="p " style="left:16px;top:621px;width:44px;height:17px;background:#f0f0f0"></div>
<div class="t " style="left:18px;top:623px;font-size:13.5px;color:#050505">Target</div>
<div class="p" style="left:50px;top:638px;width:116px;height:89px;background:conic-gradient(from 0deg at 50% 50%,#90ff00 0deg,#ffb000 52deg,#ff1000 90deg,#ff0090 127deg,#a000e0 180deg,#1000ff 232deg,#0088d0 270deg,#00ff60 307deg,#90ff00 360deg);border:1px solid #202020"></div>
<div class="p " style="left:67px;top:651px;width:83px;height:63px;background:#000;border:1px solid #fff;border-radius:10px"></div>
<svg style="left:67px;top:651px" width="83" height="63" viewBox="0 0 83 63"><g stroke="#fff" stroke-width="1" stroke-dasharray="3,2" fill="none"><line x1="-2" y1="31.5" x2="85" y2="31.5"/><line x1="41.5" y1="0" x2="41.5" y2="63"/><ellipse cx="41.5" cy="31.5" rx="21" ry="16"/></g></svg>
<div class="p " style="left:220px;top:430px;width:153px;height:579px;background:#f0f0f0;border-top:2px solid #6d6d6d;border-left:2px solid #6d6d6d;border-right:1px solid #fff;border-bottom:1px solid #fff"></div>
<div class="p " style="left:222px;top:432px;width:56px;height:23px;background:#f0f0f0;border-right:2px solid #6d6d6d"></div>
<div class="p " style="left:222px;top:454px;width:56px;height:2px;background:#6d6d6d"></div>
<div class="p " style="left:278px;top:432px;width:76px;height:23px;background:#fff;border-bottom:1px solid #c0c0c0"></div>
<div class="t " style="left:222px;top:438px;width:56px;text-align:center;font-weight:bold;font-size:12px;color:#000">Y cd/m&sup2;</div>
<div class="p " style="left:222px;top:455px;width:56px;height:23px;background:#f0f0f0;border-right:2px solid #6d6d6d"></div>
<div class="p " style="left:222px;top:477px;width:56px;height:2px;background:#6d6d6d"></div>
<div class="p " style="left:278px;top:455px;width:76px;height:23px;background:#fff;border-bottom:1px solid #c0c0c0"></div>
<div class="t " style="left:222px;top:461px;width:56px;text-align:center;font-weight:bold;font-size:12px;color:#000">Y ftL</div>
<div class="p " style="left:222px;top:478px;width:56px;height:23px;background:#f0f0f0;border-right:2px solid #6d6d6d"></div>
<div class="p " style="left:222px;top:500px;width:56px;height:2px;background:#6d6d6d"></div>
<div class="p " style="left:278px;top:478px;width:76px;height:23px;background:#fff;border-bottom:1px solid #c0c0c0"></div>
<div class="t " style="left:222px;top:484px;width:56px;text-align:center;font-weight:bold;font-size:12px;color:#000">T&deg;</div>
<div class="p " style="left:222px;top:501px;width:56px;height:23px;background:#f0f0f0;border-right:2px solid #6d6d6d"></div>
<div class="p " style="left:222px;top:523px;width:56px;height:2px;background:#6d6d6d"></div>
<div class="p " style="left:278px;top:501px;width:76px;height:23px;background:#e0e0e0;border-bottom:1px solid #c0c0c0"></div>
<div class="t " style="left:222px;top:507px;width:56px;text-align:center;font-weight:bold;font-size:12px;color:#000">X</div>
<div class="p " style="left:222px;top:524px;width:56px;height:23px;background:#f0f0f0;border-right:2px solid #6d6d6d"></div>
<div class="p " style="left:222px;top:546px;width:56px;height:2px;background:#6d6d6d"></div>
<div class="p " style="left:278px;top:524px;width:76px;height:23px;background:#e0e0e0;border-bottom:1px solid #c0c0c0"></div>
<div class="t " style="left:222px;top:530px;width:56px;text-align:center;font-weight:bold;font-size:12px;color:#000">Y</div>
<div class="p " style="left:222px;top:547px;width:56px;height:23px;background:#f0f0f0;border-right:2px solid #6d6d6d"></div>
<div class="p " style="left:222px;top:569px;width:56px;height:2px;background:#6d6d6d"></div>
<div class="p " style="left:278px;top:547px;width:76px;height:23px;background:#e0e0e0;border-bottom:1px solid #c0c0c0"></div>
<div class="t " style="left:222px;top:553px;width:56px;text-align:center;font-weight:bold;font-size:12px;color:#000">Z</div>
<div class="p " style="left:222px;top:570px;width:56px;height:23px;background:#f0f0f0;border-right:2px solid #6d6d6d"></div>
<div class="p " style="left:222px;top:592px;width:56px;height:2px;background:#6d6d6d"></div>
<div class="p " style="left:278px;top:570px;width:76px;height:23px;background:#fff;border-bottom:1px solid #c0c0c0"></div>
<div class="t " style="left:222px;top:576px;width:56px;text-align:center;font-weight:bold;font-size:12px;color:#000">R</div>
<div class="p " style="left:222px;top:593px;width:56px;height:23px;background:#f0f0f0;border-right:2px solid #6d6d6d"></div>
<div class="p " style="left:222px;top:615px;width:56px;height:2px;background:#6d6d6d"></div>
<div class="p " style="left:278px;top:593px;width:76px;height:23px;background:#fff;border-bottom:1px solid #c0c0c0"></div>
<div class="t " style="left:222px;top:599px;width:56px;text-align:center;font-weight:bold;font-size:12px;color:#000">G</div>
<div class="p " style="left:222px;top:616px;width:56px;height:23px;background:#f0f0f0;border-right:2px solid #6d6d6d"></div>
<div class="p " style="left:222px;top:638px;width:56px;height:2px;background:#6d6d6d"></div>
<div class="p " style="left:278px;top:616px;width:76px;height:23px;background:#fff;border-bottom:1px solid #c0c0c0"></div>
<div class="t " style="left:222px;top:622px;width:56px;text-align:center;font-weight:bold;font-size:12px;color:#000">B</div>
<div class="p " style="left:222px;top:639px;width:56px;height:23px;background:#f0f0f0;border-right:2px solid #6d6d6d"></div>
<div class="p " style="left:222px;top:661px;width:56px;height:2px;background:#6d6d6d"></div>
<div class="p " style="left:278px;top:639px;width:76px;height:23px;background:#e0e0e0;border-bottom:1px solid #c0c0c0"></div>
<div class="t " style="left:222px;top:645px;width:56px;text-align:center;font-weight:bold;font-size:12px;color:#000">x</div>
<div class="p " style="left:222px;top:662px;width:56px;height:23px;background:#f0f0f0;border-right:2px solid #6d6d6d"></div>
<div class="p " style="left:222px;top:684px;width:56px;height:2px;background:#6d6d6d"></div>
<div class="p " style="left:278px;top:662px;width:76px;height:23px;background:#e0e0e0;border-bottom:1px solid #c0c0c0"></div>
<div class="t " style="left:222px;top:668px;width:56px;text-align:center;font-weight:bold;font-size:12px;color:#000">y</div>
<div class="p " style="left:222px;top:685px;width:56px;height:23px;background:#f0f0f0;border-right:2px solid #6d6d6d"></div>
<div class="p " style="left:222px;top:707px;width:56px;height:2px;background:#6d6d6d"></div>
<div class="p " style="left:278px;top:685px;width:76px;height:23px;background:#e0e0e0;border-bottom:1px solid #c0c0c0"></div>
<div class="t " style="left:222px;top:691px;width:56px;text-align:center;font-weight:bold;font-size:12px;color:#000">Y</div>
<div class="p " style="left:222px;top:708px;width:56px;height:23px;background:#f0f0f0;border-right:2px solid #6d6d6d"></div>
<div class="p " style="left:222px;top:730px;width:56px;height:2px;background:#6d6d6d"></div>
<div class="p " style="left:278px;top:708px;width:76px;height:23px;background:#fff;border-bottom:1px solid #c0c0c0"></div>
<div class="t " style="left:222px;top:714px;width:56px;text-align:center;font-weight:bold;font-size:12px;color:#000">x</div>
<div class="p " style="left:222px;top:731px;width:56px;height:23px;background:#f0f0f0;border-right:2px solid #6d6d6d"></div>
<div class="p " style="left:222px;top:753px;width:56px;height:2px;background:#6d6d6d"></div>
<div class="p " style="left:278px;top:731px;width:76px;height:23px;background:#fff;border-bottom:1px solid #c0c0c0"></div>
<div class="t " style="left:222px;top:737px;width:56px;text-align:center;font-weight:bold;font-size:12px;color:#000">y</div>
<div class="p " style="left:222px;top:754px;width:56px;height:23px;background:#f0f0f0;border-right:2px solid #6d6d6d"></div>
<div class="p " style="left:222px;top:776px;width:56px;height:2px;background:#6d6d6d"></div>
<div class="p " style="left:278px;top:754px;width:76px;height:23px;background:#fff;border-bottom:1px solid #c0c0c0"></div>
<div class="t " style="left:222px;top:760px;width:56px;text-align:center;font-weight:bold;font-size:12px;color:#000">z</div>
<div class="p " style="left:222px;top:777px;width:56px;height:23px;background:#f0f0f0;border-right:2px solid #6d6d6d"></div>
<div class="p " style="left:222px;top:799px;width:56px;height:2px;background:#6d6d6d"></div>
<div class="p " style="left:278px;top:777px;width:76px;height:23px;background:#e0e0e0;border-bottom:1px solid #c0c0c0"></div>
<div class="t " style="left:222px;top:783px;width:56px;text-align:center;font-weight:bold;font-size:12px;color:#000">L</div>
<div class="p " style="left:222px;top:800px;width:56px;height:23px;background:#f0f0f0;border-right:2px solid #6d6d6d"></div>
<div class="p " style="left:222px;top:822px;width:56px;height:2px;background:#6d6d6d"></div>
<div class="p " style="left:278px;top:800px;width:76px;height:23px;background:#e0e0e0;border-bottom:1px solid #c0c0c0"></div>
<div class="t " style="left:222px;top:806px;width:56px;text-align:center;font-weight:bold;font-size:12px;color:#000">a</div>
<div class="p " style="left:222px;top:823px;width:56px;height:23px;background:#f0f0f0;border-right:2px solid #6d6d6d"></div>
<div class="p " style="left:222px;top:845px;width:56px;height:2px;background:#6d6d6d"></div>
<div class="p " style="left:278px;top:823px;width:76px;height:23px;background:#e0e0e0;border-bottom:1px solid #c0c0c0"></div>
<div class="t " style="left:222px;top:829px;width:56px;text-align:center;font-weight:bold;font-size:12px;color:#000">b</div>
<div class="p " style="left:222px;top:846px;width:56px;height:23px;background:#f0f0f0;border-right:2px solid #6d6d6d"></div>
<div class="p " style="left:222px;top:868px;width:56px;height:2px;background:#6d6d6d"></div>
<div class="p " style="left:278px;top:846px;width:76px;height:23px;background:#fff;border-bottom:1px solid #c0c0c0"></div>
<div class="t " style="left:222px;top:852px;width:56px;text-align:center;font-weight:bold;font-size:12px;color:#000">L</div>
<div class="p " style="left:222px;top:869px;width:56px;height:23px;background:#f0f0f0;border-right:2px solid #6d6d6d"></div>
<div class="p " style="left:222px;top:891px;width:56px;height:2px;background:#6d6d6d"></div>
<div class="p " style="left:278px;top:869px;width:76px;height:23px;background:#fff;border-bottom:1px solid #c0c0c0"></div>
<div class="t " style="left:222px;top:875px;width:56px;text-align:center;font-weight:bold;font-size:12px;color:#000">C</div>
<div class="p " style="left:222px;top:892px;width:56px;height:23px;background:#f0f0f0;border-right:2px solid #6d6d6d"></div>
<div class="p " style="left:222px;top:914px;width:56px;height:2px;background:#6d6d6d"></div>
<div class="p " style="left:278px;top:892px;width:76px;height:23px;background:#fff;border-bottom:1px solid #c0c0c0"></div>
<div class="t " style="left:222px;top:898px;width:56px;text-align:center;font-weight:bold;font-size:12px;color:#000">H</div>
<div class="p " style="left:222px;top:915px;width:56px;height:23px;background:#f0f0f0;border-right:2px solid #6d6d6d"></div>
<div class="p " style="left:222px;top:937px;width:56px;height:2px;background:#6d6d6d"></div>
<div class="p " style="left:278px;top:915px;width:76px;height:23px;background:#e0e0e0;border-bottom:1px solid #c0c0c0"></div>
<div class="t " style="left:222px;top:921px;width:56px;text-align:center;font-weight:bold;font-size:12px;color:#000">L</div>
<div class="p " style="left:222px;top:938px;width:56px;height:23px;background:#f0f0f0;border-right:2px solid #6d6d6d"></div>
<div class="p " style="left:222px;top:960px;width:56px;height:2px;background:#6d6d6d"></div>
<div class="p " style="left:278px;top:938px;width:76px;height:23px;background:#e0e0e0;border-bottom:1px solid #c0c0c0"></div>
<div class="t " style="left:222px;top:944px;width:56px;text-align:center;font-weight:bold;font-size:12px;color:#000">M</div>
<div class="p " style="left:222px;top:961px;width:56px;height:23px;background:#f0f0f0;border-right:2px solid #6d6d6d"></div>
<div class="p " style="left:222px;top:983px;width:56px;height:2px;background:#6d6d6d"></div>
<div class="p " style="left:278px;top:961px;width:76px;height:23px;background:#e0e0e0;border-bottom:1px solid #c0c0c0"></div>
<div class="t " style="left:222px;top:967px;width:56px;text-align:center;font-weight:bold;font-size:12px;color:#000">S</div>
<div class="p " style="left:222px;top:984px;width:132px;height:23px;background:#a0a0a0"></div>
<div class="p " style="left:355px;top:432px;width:17px;height:575px;background:#f0f0f0"></div>
<svg style="left:358px;top:437px" width="11" height="7" viewBox="0 0 11 7"><path d="M0 6.5 H11 L5.5 0 Z" fill="#a8a8a8"/></svg>
<svg style="left:358px;top:994px" width="11" height="7" viewBox="0 0 11 7"><path d="M0 0 H11 L5.5 6.5 Z" fill="#a8a8a8"/></svg>
<div class="p " style="left:391px;top:387px;width:1505px;height:629px;background:#ebebeb;border:2px solid #727272"></div>
<div class="p " style="left:393px;top:389px;width:1501px;height:8px;background:#727272"></div>
<div class="p " style="left:393px;top:389px;width:1501px;height:17px;background:linear-gradient(90deg,#e1e8f4,#edf2fa);border-bottom:1px solid #8c8c8c;border-radius:6px 6px 0 0"></div>
<div class="t " style="left:398px;top:392px;font-weight:bold;font-size:12.5px;letter-spacing:0.5px;color:#3d3a3a">Information</div>
<div class="p " style="left:396px;top:409px;width:302px;height:23px;background:#fff;border-top:2px solid #6d6d6d;border-left:2px solid #6d6d6d;border-bottom:1px solid #f4f4f4;border-right:1px solid #dcdcdc"></div>
<div class="t " style="left:400px;top:414px;font-size:13.5px;color:#050505">NearBlack - NearWhite</div>
<div class="p " style="left:680px;top:411px;width:17px;height:19px;background:#ebebeb;border-right:2px solid #6d6d6d;border-bottom:2px solid #6d6d6d;border-top:1px solid #fff;border-left:1px solid #fff"></div>
<svg style="left:685px;top:419px" width="8" height="5" viewBox="0 0 8 5"><path d="M0 0 H8 L4 4.5 Z" fill="#000"/></svg>
<div class="p " style="left:398px;top:439px;width:748px;height:570px;background:#fff;border-top:2px solid #717171;border-left:2px solid #717171;border-right:1px solid #fff;border-bottom:1px solid #fff"></div>
<div class="p " style="left:400px;top:441px;width:744px;height:566px;border-top:2px solid #a0a0a0;border-left:2px solid #a0a0a0;border-right:2px solid #fff;border-bottom:2px solid #fff"></div>
<div class="p " style="left:1146px;top:439px;width:748px;height:570px;background:#fff;border-top:2px solid #717171;border-left:2px solid #717171;border-right:1px solid #fff;border-bottom:1px solid #fff"></div>
<div class="p " style="left:1148px;top:441px;width:744px;height:566px;border-top:2px solid #a0a0a0;border-left:2px solid #a0a0a0;border-right:2px solid #fff;border-bottom:2px solid #fff"></div>
<svg style="left:402px;top:443px;overflow:hidden" width="740" height="562" viewBox="0 0 740 562"><defs><linearGradient id="nbbg" x1="0" y1="0" x2="1" y2="0"><stop offset="0" stop-color="#1f1f1f"/><stop offset="1" stop-color="#0b0b0b"/></linearGradient></defs><rect x="0" y="0" width="740" height="562" fill="url(#nbbg)"/><rect x="0" y="0" width="1" height="562" fill="#004040"/><rect x="148" y="0" width="1" height="562" fill="#004040"/><rect x="296" y="0" width="1" height="562" fill="#004040"/><rect x="444" y="0" width="1" height="562" fill="#004040"/><rect x="592" y="0" width="1" height="562" fill="#004040"/><rect x="0" y="56" width="740" height="1" fill="#004040"/><rect x="0" y="112" width="740" height="1" fill="#004040"/><rect x="0" y="168" width="740" height="1" fill="#004040"/><rect x="0" y="224" width="740" height="1" fill="#004040"/><rect x="0" y="280" width="740" height="1" fill="#004040"/><rect x="0" y="336" width="740" height="1" fill="#004040"/><rect x="0" y="393" width="740" height="1" fill="#004040"/><rect x="0" y="449" width="740" height="1" fill="#004040"/><rect x="0" y="505" width="740" height="1" fill="#004040"/><text x="2" y="52" font-family="Liberation Serif" font-size="13.7" fill="#c8c4c0">0.9 cd m-2</text><text x="2" y="108" font-family="Liberation Serif" font-size="13.7" fill="#c8c4c0">0.8 cd m-2</text><text x="2" y="164" font-family="Liberation Serif" font-size="13.7" fill="#c8c4c0">0.7 cd m-2</text><text x="2" y="220" font-family="Liberation Serif" font-size="13.7" fill="#c8c4c0">0.6 cd m-2</text><text x="2" y="276" font-family="Liberation Serif" font-size="13.7" fill="#c8c4c0">0.5 cd m-2</text><text x="2" y="332" font-family="Liberation Serif" font-size="13.7" fill="#c8c4c0">0.4 cd m-2</text><text x="2" y="389" font-family="Liberation Serif" font-size="13.7" fill="#c8c4c0">0.3 cd m-2</text><text x="2" y="445" font-family="Liberation Serif" font-size="13.7" fill="#c8c4c0">0.2 cd m-2</text><text x="2" y="501" font-family="Liberation Serif" font-size="13.7" fill="#c8c4c0">0.1 cd m-2</text><text x="150" y="558" font-family="Liberation Serif" font-size="13.7" fill="#f2f2f2">1% White</text><text x="298" y="558" font-family="Liberation Serif" font-size="13.7" fill="#f2f2f2">2% White</text><text x="446" y="558" font-family="Liberation Serif" font-size="13.7" fill="#f2f2f2">3% White</text><text x="594" y="558" font-family="Liberation Serif" font-size="13.7" fill="#f2f2f2">4% White</text><text x="385" y="14" text-anchor="middle" font-family="Liberation Sans" font-weight="bold" font-size="14.8" fill="#d8d820">Near Black Luminance Response</text><text x="730" y="519" text-anchor="end" font-family="Liberation Sans" font-weight="bold" font-size="16" fill="#575757">hcfr.sourceforge.net</text><polyline points="1.6,511.8 135,492 270,488 473,478.7 608,469.7" fill="none" stroke="#ffff00" stroke-width="2.3" stroke-linejoin="round"/><rect x="131" y="488" width="8" height="8" fill="#ffff00"/><rect x="266" y="484" width="8" height="8" fill="#ffff00"/><rect x="469" y="474.7" width="8" height="8" fill="#ffff00"/><rect x="604" y="465.7" width="8" height="8" fill="#ffff00"/><polyline points="1.6,511.8 135,510.75 270,506.8 473,493.8 608,478.7" fill="none" stroke="#ececec" stroke-width="1" stroke-dasharray="4,3"/><rect x="-2.4" y="507.8" width="8" height="8" fill="#e2e2e2"/><rect x="131" y="506.75" width="8" height="8" fill="#e2e2e2"/><rect x="266" y="502.8" width="8" height="8" fill="#e2e2e2"/><rect x="469" y="489.8" width="8" height="8" fill="#e2e2e2"/><rect x="604" y="474.7" width="8" height="8" fill="#e2e2e2"/></svg>
<svg style="left:1150px;top:443px;overflow:hidden" width="740" height="562" viewBox="0 0 740 562"><defs><linearGradient id="nwbg" x1="0" y1="0" x2="1" y2="0"><stop offset="0" stop-color="#747474"/><stop offset="1" stop-color="#fcfcfc"/></linearGradient></defs><rect x="0" y="0" width="740" height="562" fill="url(#nwbg)"/><rect x="0" y="0" width="1" height="562" fill="#004040"/><rect x="123" y="0" width="1" height="562" fill="#004040"/><rect x="246" y="0" width="1" height="562" fill="#004040"/><rect x="370" y="0" width="1" height="562" fill="#004040"/><rect x="493" y="0" width="1" height="562" fill="#004040"/><rect x="616" y="0" width="1" height="562" fill="#004040"/><rect x="0" y="80" width="740" height="1" fill="#004040"/><rect x="0" y="160" width="740" height="1" fill="#004040"/><rect x="0" y="240" width="740" height="1" fill="#004040"/><rect x="0" y="321" width="740" height="1" fill="#004040"/><rect x="0" y="401" width="740" height="1" fill="#004040"/><rect x="0" y="481" width="740" height="1" fill="#004040"/><text x="2" y="76" font-family="Liberation Serif" font-size="13.7" fill="#d4d4d4">122 cd m-2</text><text x="2" y="156" font-family="Liberation Serif" font-size="13.7" fill="#d4d4d4">120 cd m-2</text><text x="2" y="236" font-family="Liberation Serif" font-size="13.7" fill="#d4d4d4">118 cd m-2</text><text x="2" y="317" font-family="Liberation Serif" font-size="13.7" fill="#d4d4d4">116 cd m-2</text><text x="2" y="397" font-family="Liberation Serif" font-size="13.7" fill="#d4d4d4">114 cd m-2</text><text x="2" y="477" font-family="Liberation Serif" font-size="13.7" fill="#d4d4d4">112 cd m-2</text><text x="125" y="558" font-family="Liberation Serif" font-size="13.7" fill="#161616">95% White</text><text x="248" y="558" font-family="Liberation Serif" font-size="13.7" fill="#161616">96% White</text><text x="372" y="558" font-family="Liberation Serif" font-size="13.7" fill="#161616">97% White</text><text x="495" y="558" font-family="Liberation Serif" font-size="13.7" fill="#161616">98% White</text><text x="618" y="558" font-family="Liberation Serif" font-size="13.7" fill="#161616">99% White</text><text x="385" y="14" text-anchor="middle" font-family="Liberation Sans" font-weight="bold" font-size="14.8" fill="#6a2c6a">Near White Luminance Response</text><text x="730" y="519" text-anchor="end" font-family="Liberation Sans" font-weight="bold" font-size="16" fill="#8c8c8c">hcfr.sourceforge.net</text><polyline points="233,504 345,386 514,222 627,125 738,16" fill="none" stroke="#ffff00" stroke-width="2.3" stroke-linejoin="round"/><rect x="229" y="500" width="8" height="8" fill="#ffff00"/><rect x="341" y="382" width="8" height="8" fill="#ffff00"/><rect x="510" y="218" width="8" height="8" fill="#ffff00"/><rect x="623" y="121" width="8" height="8" fill="#ffff00"/><rect x="734" y="12" width="8" height="8" fill="#ffff00"/><polyline points="233,497 345,394 514,236 627,129 738,21" fill="none" stroke="#ececec" stroke-width="1" stroke-dasharray="4,3"/><rect x="229" y="493" width="8" height="8" fill="#e2e2e2"/><rect x="341" y="390" width="8" height="8" fill="#e2e2e2"/><rect x="510" y="232" width="8" height="8" fill="#e2e2e2"/><rect x="623" y="125" width="8" height="8" fill="#e2e2e2"/><rect x="734" y="17" width="8" height="8" fill="#e2e2e2"/></svg>
<div class="p " style="left:2px;top:1016px;width:1895px;height:1px;background:#fdfdfd"></div>
<div class="p " style="left:2px;top:1017px;width:1895px;height:2px;background:#707070"></div>
<div class="p " style="left:2px;top:1019px;width:1895px;height:3px;background:#b8b8b8"></div>
<div class="p " style="left:2px;top:1022px;width:1895px;height:1px;background:#fdfdfd"></div>
<div class="p " style="left:2px;top:1023px;width:1895px;height:19px;background:#f0f0f0"></div>
<div class="p " style="left:2px;top:1039px;width:1915px;height:1px;background:#e0e0e0"></div>
<div class="p " style="left:2px;top:1040px;width:1915px;height:2px;background:#fdfdfd"></div>
<div class="p " style="left:0px;top:1021px;width:2px;height:18px;background:#8f8f8f"></div>
<div class="p " style="left:19px;top:1030px;width:1825px;height:2px;background:#808080"></div>
<div class="p " style="left:0px;top:1042px;width:1920px;height:1px;background:#000"></div>
<div class="p " style="left:0px;top:1043px;width:1920px;height:18px;background:#f0f0f0"></div>
<div class="p " style="left:0px;top:1043px;width:54px;height:18px;background:#000"></div>
<div class="p " style="left:2px;top:1044px;width:15px;height:15px;background:#f0f0f0;border-right:1px solid #a0a0a0;border-bottom:1px solid #a0a0a0"></div>
<div class="p " style="left:19px;top:1044px;width:16px;height:15px;background:#f0f0f0;border-right:1px solid #a0a0a0;border-bottom:1px solid #a0a0a0"></div>
<div class="p " style="left:37px;top:1044px;width:15px;height:15px;background:#f0f0f0;border-right:1px solid #a0a0a0;border-bottom:1px solid #a0a0a0"></div>
<svg style="left:5px;top:1047px" width="9" height="9" viewBox="0 0 9 9"><path d="M0.5 0.5 L8.5 8.5 M8.5 0.5 L0.5 8.5" stroke="#000" stroke-width="1.2"/></svg>
<svg style="left:24px;top:1048px" width="5" height="8" viewBox="0 0 5 8"><path d="M4.5 0 V8 L0 4 Z" fill="#000"/></svg>
<svg style="left:42px;top:1048px" width="5" height="8" viewBox="0 0 5 8"><path d="M0 0 V8 L4.5 4 Z" fill="#000"/></svg>
<svg style="left:0px;top:1043px" width="400" height="18" viewBox="0 0 400 18"><path d="M300 0.5 L307 16.5 H376 L383 0.5" fill="#efefef" stroke="#000" stroke-width="1"/><path d="M196 0.5 L203 16.5 H301 L308 0.5" fill="#efefef" stroke="#000" stroke-width="1"/><path d="M118 0.5 L125 16.5 H197 L204 0.5" fill="#efefef" stroke="#000" stroke-width="1"/><path d="M55 0 L62 16.5 H119 L126 0" fill="#fff" stroke="#000" stroke-width="1"/><rect x="55" y="0" width="71" height="1" fill="#fff"/></svg>
<div class="t " style="left:66px;top:1046px;font-weight:bold;font-size:11px">Measures</div>
<div class="t " style="left:135px;top:1046px;font-size:10.5px;letter-spacing:-0.45px">CIE Diagram</div>
<div class="t " style="left:216px;top:1046px;font-size:10.5px;letter-spacing:-0.6px">Color temperature</div>
<div class="t " style="left:318px;top:1046px;font-size:10.5px;letter-spacing:-0.5px">RGB Levels</div>
<svg style="left:1751px;top:1044px" width="15" height="14" viewBox="0 0 15 14"><path d="M1 1 H13 V9 Q13 13 10 13 H4 Q1 13 1 9 Z" fill="#7a7a00" stroke="#000" stroke-width="0.8"/><rect x="3" y="3" width="8" height="5" fill="#e00"/><path d="M3 5 Q6 2 9 4" fill="none" stroke="#fff" stroke-width="1"/><rect x="9" y="9" width="4" height="4" fill="#ff0"/></svg>
<div class="p " style="left:1846px;top:1044px;width:13px;height:13px;background:#fff;border-top:1px solid #707070;border-left:1px solid #707070;border-right:1px solid #e0e0e0;border-bottom:1px solid #e0e0e0"></div>
<div class="t " style="left:1864px;top:1045px;font-size:11.2px;color:#000">Reference</div>
<div class="p " style="left:0px;top:1061px;width:1920px;height:19px;background:linear-gradient(90deg,#e4ebf5,#eaf0f8 40%,#eef2fa)"></div>
<div class="t " style="left:2px;top:1066px;font-size:12px;color:#050505">Ready</div>
<div class="p " style="left:1743px;top:1063px;width:74px;height:17px;background:#eef2fa;border-top:1px solid #9fb4d2;border-left:1px solid #9fb4d2"></div>
<div class="p " style="left:1820px;top:1063px;width:28px;height:17px;background:#eef2fa;border-top:1px solid #9fb4d2;border-left:1px solid #9fb4d2"></div>
<div class="p " style="left:1851px;top:1063px;width:33px;height:17px;background:#eef2fa;border-top:1px solid #9fb4d2;border-left:1px solid #9fb4d2"></div>
<div class="p " style="left:1887px;top:1063px;width:33px;height:17px;background:#eef2fa;border-top:1px solid #9fb4d2;border-left:1px solid #9fb4d2"></div>
<div class="t " style="left:1853px;top:1066px;font-size:11.8px;color:#050505">NUM</div>
</body></html>
